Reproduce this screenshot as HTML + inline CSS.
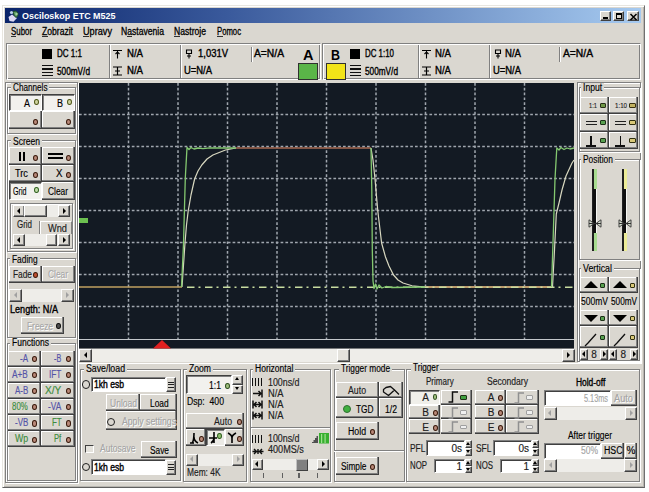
<!DOCTYPE html>
<html><head><meta charset="utf-8"><style>
html,body{margin:0;padding:0;width:649px;height:492px;overflow:hidden;background:#fff;}
body{position:relative;font-family:"Liberation Sans",sans-serif;}

</style></head><body>
<div style="position:absolute;left:2px;top:5px;width:643px;height:482.5px;background:#dad7d0;box-sizing:border-box;border-top:1px solid #e8e6e0;border-left:1px solid #e8e6e0;border-right:1.5px solid #707070;border-bottom:1.5px solid #606060;box-shadow:inset 1px 1px 0 #ffffff, inset -1px -1px 0 #b8b6b0;"></div>
<div style="position:absolute;left:5px;top:8px;width:636px;height:15px;background:linear-gradient(to right,#0a246a 0%,#3a5a9c 35%,#a6caf0 100%);"></div>
<svg style="position:absolute;left:7px;top:9px" width="14" height="14" viewBox="0 0 14 14"><path d="M1.5 8 L5 5.5 L10 9 L6.5 12.8 L2.5 12 Z" fill="#dcd8f4"/><path d="M6 2.5 Q9 1 11 4 Q11.5 7 9 8.5 Q6.5 7 6 2.5Z" fill="#5a9a60" stroke="#1e4a2a" stroke-width="1"/><circle cx="4.5" cy="3.5" r="1.6" fill="#b8d0e8"/><circle cx="9.5" cy="5" r="1.2" fill="#a0d0a0"/></svg>
<div style="position:absolute;left:21.50px;top:12.26px;font-size:8.8px;line-height:8.8px;font-weight:700;color:#fff;white-space:pre;transform-origin:0 0;transform:scaleX(1.017);">Osciloskop ETC M525</div>
<div style="position:absolute;left:600px;top:11px;width:11px;height:10px;background:#dad7d0;box-sizing:border-box;border-top:1px solid #ffffff;border-left:1px solid #ffffff;border-right:1px solid #404040;border-bottom:1px solid #404040;box-shadow:inset -1px -1px 0 #808080;"></div>
<div style="position:absolute;left:613px;top:11px;width:11px;height:10px;background:#dad7d0;box-sizing:border-box;border-top:1px solid #ffffff;border-left:1px solid #ffffff;border-right:1px solid #404040;border-bottom:1px solid #404040;box-shadow:inset -1px -1px 0 #808080;"></div>
<div style="position:absolute;left:627px;top:11px;width:12px;height:10px;background:#dad7d0;box-sizing:border-box;border-top:1px solid #ffffff;border-left:1px solid #ffffff;border-right:1px solid #404040;border-bottom:1px solid #404040;box-shadow:inset -1px -1px 0 #808080;"></div>
<div style="position:absolute;left:603px;top:17px;width:5px;height:2px;background:#000;"></div>
<div style="position:absolute;left:615.5px;top:13px;width:6.0px;height:6px;box-sizing:border-box;border:1px solid #000;border-top:2px solid #000;"></div>
<svg style="position:absolute;left:629px;top:12.5px" width="9" height="8" viewBox="0 0 9 8"><path d="M1.5 1 L7.5 7 M7.5 1 L1.5 7" stroke="#000" stroke-width="1.5"/></svg>
<div style="position:absolute;left:10.60px;top:26.50px;font-size:10px;line-height:10px;font-weight:400;color:#000;white-space:pre;transform-origin:0 0;transform:scaleX(0.787);-webkit-text-stroke:0.15px #000;-webkit-text-stroke:0.3px #000;">Subor</div>
<div style="position:absolute;left:10.6px;top:35.5px;width:5.500000000000002px;height:1.0px;background:#303030;"></div>
<div style="position:absolute;left:42.00px;top:26.50px;font-size:10px;line-height:10px;font-weight:400;color:#000;white-space:pre;transform-origin:0 0;transform:scaleX(0.858);-webkit-text-stroke:0.15px #000;-webkit-text-stroke:0.3px #000;">Zobrazit</div>
<div style="position:absolute;left:42px;top:35.5px;width:5.5px;height:1.0px;background:#303030;"></div>
<div style="position:absolute;left:83.00px;top:26.50px;font-size:10px;line-height:10px;font-weight:400;color:#000;white-space:pre;transform-origin:0 0;transform:scaleX(0.915);-webkit-text-stroke:0.15px #000;-webkit-text-stroke:0.3px #000;">Upravy</div>
<div style="position:absolute;left:83px;top:35.5px;width:5.5px;height:1.0px;background:#303030;"></div>
<div style="position:absolute;left:121.00px;top:26.50px;font-size:10px;line-height:10px;font-weight:400;color:#000;white-space:pre;transform-origin:0 0;transform:scaleX(0.859);-webkit-text-stroke:0.15px #000;-webkit-text-stroke:0.3px #000;">Nastavenia</div>
<div style="position:absolute;left:126.5px;top:35.5px;width:5.5px;height:1.0px;background:#303030;"></div>
<div style="position:absolute;left:174.30px;top:26.50px;font-size:10px;line-height:10px;font-weight:400;color:#000;white-space:pre;transform-origin:0 0;transform:scaleX(0.859);-webkit-text-stroke:0.15px #000;-webkit-text-stroke:0.3px #000;">Nastroje</div>
<div style="position:absolute;left:174.3px;top:35.5px;width:5.5px;height:1.0px;background:#303030;"></div>
<div style="position:absolute;left:217.00px;top:26.50px;font-size:10px;line-height:10px;font-weight:400;color:#000;white-space:pre;transform-origin:0 0;transform:scaleX(0.771);-webkit-text-stroke:0.15px #000;-webkit-text-stroke:0.3px #000;">Pomoc</div>
<div style="position:absolute;left:217px;top:35.5px;width:5.5px;height:1.0px;background:#303030;"></div>
<div style="position:absolute;left:6px;top:43px;width:315px;height:37px;box-sizing:border-box;border-top:1px solid #808080;border-left:1px solid #808080;border-right:1px solid #ffffff;border-bottom:1px solid #ffffff;box-shadow:inset 1px 1px 0 #ffffff, inset -1px -1px 0 #808080;"></div>
<div style="position:absolute;left:322px;top:43px;width:319px;height:37px;box-sizing:border-box;border-top:1px solid #808080;border-left:1px solid #808080;border-right:1px solid #ffffff;border-bottom:1px solid #ffffff;box-shadow:inset 1px 1px 0 #ffffff, inset -1px -1px 0 #808080;"></div>
<div style="position:absolute;left:42px;top:49px;width:10px;height:10px;background:#000;"></div>
<div style="position:absolute;left:56.60px;top:49.00px;font-size:10px;line-height:10px;font-weight:400;color:#000;white-space:pre;transform-origin:0 0;transform:scaleX(0.803);-webkit-text-stroke:0.15px #000;-webkit-text-stroke:0.35px #000;">DC 1:1</div>
<div style="position:absolute;left:42px;top:65.0px;width:11px;height:1.2999999999999972px;background:#101010;"></div>
<div style="position:absolute;left:42px;top:68.4px;width:11px;height:1.2999999999999972px;background:#101010;"></div>
<div style="position:absolute;left:42px;top:71.8px;width:11px;height:1.2999999999999972px;background:#101010;"></div>
<div style="position:absolute;left:42px;top:75.2px;width:11px;height:1.2999999999999972px;background:#101010;"></div>
<div style="position:absolute;left:56.60px;top:66.50px;font-size:10px;line-height:10px;font-weight:400;color:#000;white-space:pre;transform-origin:0 0;transform:scaleX(0.824);-webkit-text-stroke:0.15px #000;-webkit-text-stroke:0.35px #000;">500mV/d</div>
<div style="position:absolute;left:109px;top:45px;width:1px;height:33px;background:#808080;"></div>
<div style="position:absolute;left:110px;top:45px;width:1px;height:33px;background:#ffffff;"></div>
<svg style="position:absolute;left:112px;top:48.5px" width="11" height="10" viewBox="0 0 11 10"><path d="M1 1.5 H10 M5.5 1.5 V9.5 M3.5 5 L5.5 3 L7.5 5" stroke="#000" stroke-width="1.1" fill="none"/></svg>
<div style="position:absolute;left:126.80px;top:49.00px;font-size:10px;line-height:10px;font-weight:400;color:#000;white-space:pre;transform-origin:0 0;transform:scaleX(0.960);-webkit-text-stroke:0.15px #000;-webkit-text-stroke:0.35px #000;">N/A</div>
<svg style="position:absolute;left:112px;top:65.5px" width="11" height="10" viewBox="0 0 11 10"><path d="M1 1 H10 M1 9 H10 M5.5 1 V9 M3 5 H8" stroke="#000" stroke-width="1.2" fill="none"/></svg>
<div style="position:absolute;left:126.80px;top:66.30px;font-size:10px;line-height:10px;font-weight:400;color:#000;white-space:pre;transform-origin:0 0;transform:scaleX(0.960);-webkit-text-stroke:0.15px #000;-webkit-text-stroke:0.35px #000;">N/A</div>
<div style="position:absolute;left:180px;top:45px;width:1px;height:33px;background:#808080;"></div>
<div style="position:absolute;left:181px;top:45px;width:1px;height:33px;background:#ffffff;"></div>
<svg style="position:absolute;left:184px;top:48.5px" width="10" height="10" viewBox="0 0 10 10"><path d="M2.5 1 H7.5 V4.5 H2.5 Z M5 4.5 V9.5 M3 7 H7" stroke="#000" stroke-width="1.1" fill="none"/></svg>
<div style="position:absolute;left:198.00px;top:49.00px;font-size:10px;line-height:10px;font-weight:400;color:#000;white-space:pre;transform-origin:0 0;transform:scaleX(0.946);-webkit-text-stroke:0.15px #000;-webkit-text-stroke:0.35px #000;">1,031V</div>
<div style="position:absolute;left:184.00px;top:66.30px;font-size:10px;line-height:10px;font-weight:400;color:#000;white-space:pre;transform-origin:0 0;transform:scaleX(0.942);-webkit-text-stroke:0.15px #000;-webkit-text-stroke:0.35px #000;">U=N/A</div>
<div style="position:absolute;left:251px;top:47px;width:1px;height:15px;background:#808080;"></div>
<div style="position:absolute;left:252px;top:47px;width:1px;height:15px;background:#ffffff;"></div>
<div style="position:absolute;left:253.60px;top:49.00px;font-size:10px;line-height:10px;font-weight:400;color:#000;white-space:pre;transform-origin:0 0;transform:scaleX(1.028);-webkit-text-stroke:0.15px #000;-webkit-text-stroke:0.35px #000;">A=N/A</div>
<div style="position:absolute;left:303.40px;top:48.20px;font-size:14px;line-height:14px;font-weight:700;color:#000;white-space:pre;transform-origin:0 0;transform:scaleX(1.037);">A</div>
<div style="position:absolute;left:298px;top:63px;width:20px;height:16.5px;background:#5ab548;box-sizing:border-box;border:1px solid #303030;"></div>
<div style="position:absolute;left:330.60px;top:48.20px;font-size:14px;line-height:14px;font-weight:700;color:#000;white-space:pre;transform-origin:0 0;transform:scaleX(0.889);">B</div>
<div style="position:absolute;left:325.5px;top:63px;width:20.0px;height:16.5px;background:#f2e418;box-sizing:border-box;border:1px solid #303030;"></div>
<div style="position:absolute;left:350.3px;top:48.7px;width:10.0px;height:10.0px;background:#000;"></div>
<div style="position:absolute;left:364.60px;top:49.00px;font-size:10px;line-height:10px;font-weight:400;color:#000;white-space:pre;transform-origin:0 0;transform:scaleX(0.790);-webkit-text-stroke:0.15px #000;-webkit-text-stroke:0.35px #000;">DC 1:10</div>
<div style="position:absolute;left:350px;top:65.0px;width:11px;height:1.2999999999999972px;background:#101010;"></div>
<div style="position:absolute;left:350px;top:68.4px;width:11px;height:1.2999999999999972px;background:#101010;"></div>
<div style="position:absolute;left:350px;top:71.8px;width:11px;height:1.2999999999999972px;background:#101010;"></div>
<div style="position:absolute;left:350px;top:75.2px;width:11px;height:1.2999999999999972px;background:#101010;"></div>
<div style="position:absolute;left:364.60px;top:66.50px;font-size:10px;line-height:10px;font-weight:400;color:#000;white-space:pre;transform-origin:0 0;transform:scaleX(0.824);-webkit-text-stroke:0.15px #000;-webkit-text-stroke:0.35px #000;">500mV/d</div>
<div style="position:absolute;left:418px;top:45px;width:1px;height:33px;background:#808080;"></div>
<div style="position:absolute;left:419px;top:45px;width:1px;height:33px;background:#ffffff;"></div>
<svg style="position:absolute;left:421px;top:48.5px" width="11" height="10" viewBox="0 0 11 10"><path d="M1 1.5 H10 M5.5 1.5 V9.5 M3.5 5 L5.5 3 L7.5 5" stroke="#000" stroke-width="1.1" fill="none"/></svg>
<div style="position:absolute;left:434.80px;top:49.00px;font-size:10px;line-height:10px;font-weight:400;color:#000;white-space:pre;transform-origin:0 0;transform:scaleX(0.960);-webkit-text-stroke:0.15px #000;-webkit-text-stroke:0.35px #000;">N/A</div>
<svg style="position:absolute;left:421px;top:65.5px" width="11" height="10" viewBox="0 0 11 10"><path d="M1 1 H10 M1 9 H10 M5.5 1 V9 M3 5 H8" stroke="#000" stroke-width="1.2" fill="none"/></svg>
<div style="position:absolute;left:434.80px;top:66.30px;font-size:10px;line-height:10px;font-weight:400;color:#000;white-space:pre;transform-origin:0 0;transform:scaleX(0.960);-webkit-text-stroke:0.15px #000;-webkit-text-stroke:0.35px #000;">N/A</div>
<div style="position:absolute;left:489px;top:45px;width:1px;height:33px;background:#808080;"></div>
<div style="position:absolute;left:490px;top:45px;width:1px;height:33px;background:#ffffff;"></div>
<svg style="position:absolute;left:492.5px;top:48.5px" width="10" height="10" viewBox="0 0 10 10"><path d="M2.5 1 H7.5 V4.5 H2.5 Z M5 4.5 V9.5 M3 7 H7" stroke="#000" stroke-width="1.1" fill="none"/></svg>
<div style="position:absolute;left:505.00px;top:49.00px;font-size:10px;line-height:10px;font-weight:400;color:#000;white-space:pre;transform-origin:0 0;transform:scaleX(0.960);-webkit-text-stroke:0.15px #000;-webkit-text-stroke:0.35px #000;">N/A</div>
<div style="position:absolute;left:492.50px;top:66.30px;font-size:10px;line-height:10px;font-weight:400;color:#000;white-space:pre;transform-origin:0 0;transform:scaleX(0.942);-webkit-text-stroke:0.15px #000;-webkit-text-stroke:0.35px #000;">U=N/A</div>
<div style="position:absolute;left:559px;top:47px;width:1px;height:15px;background:#808080;"></div>
<div style="position:absolute;left:560px;top:47px;width:1px;height:15px;background:#ffffff;"></div>
<div style="position:absolute;left:563.00px;top:49.00px;font-size:10px;line-height:10px;font-weight:400;color:#000;white-space:pre;transform-origin:0 0;transform:scaleX(1.028);-webkit-text-stroke:0.15px #000;-webkit-text-stroke:0.35px #000;">A=N/A</div>
<svg style="position:absolute;left:79px;top:83px" width="495" height="265.5" viewBox="0 0 495 265.5"><rect x="0" y="0" width="495" height="265.5" fill="#131a23"/><line x1="49.5" y1="0" x2="49.5" y2="256" stroke="#a0a6ae" stroke-width="1.5" stroke-dasharray="2.7 2.1"/><line x1="99.0" y1="0" x2="99.0" y2="256" stroke="#a0a6ae" stroke-width="1.5" stroke-dasharray="2.7 2.1"/><line x1="148.5" y1="0" x2="148.5" y2="256" stroke="#a0a6ae" stroke-width="1.5" stroke-dasharray="2.7 2.1"/><line x1="198.0" y1="0" x2="198.0" y2="256" stroke="#a0a6ae" stroke-width="1.5" stroke-dasharray="2.7 2.1"/><line x1="247.5" y1="0" x2="247.5" y2="256" stroke="#a0a6ae" stroke-width="1.5" stroke-dasharray="2.7 2.1"/><line x1="297.0" y1="0" x2="297.0" y2="256" stroke="#a0a6ae" stroke-width="1.5" stroke-dasharray="2.7 2.1"/><line x1="346.5" y1="0" x2="346.5" y2="256" stroke="#a0a6ae" stroke-width="1.5" stroke-dasharray="2.7 2.1"/><line x1="396.0" y1="0" x2="396.0" y2="256" stroke="#a0a6ae" stroke-width="1.5" stroke-dasharray="2.7 2.1"/><line x1="445.5" y1="0" x2="445.5" y2="256" stroke="#a0a6ae" stroke-width="1.5" stroke-dasharray="2.7 2.1"/><line x1="0" y1="31.5" x2="495" y2="31.5" stroke="#a0a6ae" stroke-width="1.5" stroke-dasharray="2.7 2.1"/><line x1="0" y1="63.5" x2="495" y2="63.5" stroke="#a0a6ae" stroke-width="1.5" stroke-dasharray="2.7 2.1"/><line x1="0" y1="95.5" x2="495" y2="95.5" stroke="#a0a6ae" stroke-width="1.5" stroke-dasharray="2.7 2.1"/><line x1="0" y1="127.5" x2="495" y2="127.5" stroke="#a0a6ae" stroke-width="1.5" stroke-dasharray="2.7 2.1"/><line x1="0" y1="159.5" x2="495" y2="159.5" stroke="#a0a6ae" stroke-width="1.5" stroke-dasharray="2.7 2.1"/><line x1="0" y1="191.5" x2="495" y2="191.5" stroke="#a0a6ae" stroke-width="1.5" stroke-dasharray="2.7 2.1"/><line x1="0" y1="223.5" x2="495" y2="223.5" stroke="#a0a6ae" stroke-width="1.5" stroke-dasharray="2.7 2.1"/><line x1="0" y1="256.5" x2="495" y2="256.5" stroke="#c4c8cc" stroke-width="1.2"/><path d="M74 265.5 L83 257 L92 265.5 Z" fill="#e02020"/><polyline points="0.0,204.0 103.0,204.0" fill="none" stroke="#c0a060" stroke-width="1.6"/><polyline points="157.0,65.0 292.0,65.0" fill="none" stroke="#a86a52" stroke-width="1.7"/><polyline points="346.0,204.0 473.0,204.0" fill="none" stroke="#bc9a6c" stroke-width="1.8"/><line x1="104" y1="204.2" x2="495" y2="204.2" stroke="#c8dca0" stroke-width="1.6" stroke-dasharray="7.5 4 2 4.5" stroke-dashoffset="-4"/><polyline points="103.0,204.0 104.5,182.0 106.0,160.0 107.5,142.0 109.2,128.0 112.0,112.0 115.6,96.0 119.0,88.0 122.8,82.0 128.0,76.0 133.9,72.0 146.5,67.0 157.0,65.0" fill="none" stroke="#d8d8c0" stroke-width="1.2" stroke-linejoin="round"/><polyline points="292.0,65.0 294.0,77.0 296.0,96.0 298.8,128.0 302.6,160.0 306.5,174.0 310.0,183.0 314.5,192.0 319.0,197.0 324.0,200.0 333.0,202.8 346.0,204.0" fill="none" stroke="#d8d8c0" stroke-width="1.2" stroke-linejoin="round"/><polyline points="473.5,204.0 475.5,167.0 477.3,131.0 480.0,120.0 483.0,107.0 487.0,93.0 493.0,80.0 495.0,77.0" fill="none" stroke="#d8d8c0" stroke-width="1.2" stroke-linejoin="round"/><polyline points="102.5,204.0 104.5,161.0 106.3,95.0 108.0,64.5 110.0,66.5 112.0,64.5 115.0,66.0 119.0,65.0 124.0,65.6 131.0,64.8 157.0,65.0" fill="none" stroke="#84c870" stroke-width="1.3" stroke-linejoin="round"/><polyline points="292.0,65.0 292.8,107.0 293.3,167.0 294.0,198.0 295.0,205.5 296.5,201.0 298.0,206.0 300.0,202.0 303.0,205.0 307.0,203.5 313.0,204.5 346.0,204.0" fill="none" stroke="#84c870" stroke-width="1.3" stroke-linejoin="round"/><polyline points="472.5,204.0 474.0,160.0 476.0,96.0 477.8,65.0 480.0,67.0 482.0,64.5 485.0,66.5 488.0,65.0 491.0,66.0 495.0,65.0" fill="none" stroke="#84c870" stroke-width="1.3" stroke-linejoin="round"/></svg>
<div style="position:absolute;left:78.5px;top:217.5px;width:9.5px;height:5.5px;background:#6cc050;"></div>
<div style="position:absolute;left:5px;top:82px;width:73px;height:400.5px;box-sizing:border-box;border:1px solid #808080;box-shadow:inset 1px 1px 0 #ffffff, 1px 1px 0 #ffffff;"></div>
<div style="position:absolute;left:6.5px;top:87px;width:69.5px;height:46.5px;box-sizing:border-box;border:1px solid #808080;box-shadow:inset 1px 1px 0 #ffffff, 1px 1px 0 #ffffff;"></div>
<div style="position:absolute;left:10.8px;top:83px;width:38.5px;height:8px;background:#dad7d0;"></div>
<div style="position:absolute;left:12.80px;top:82.80px;font-size:10px;line-height:10px;font-weight:400;color:#000;white-space:pre;transform-origin:0 0;transform:scaleX(0.816);-webkit-text-stroke:0.15px #000;">Channels</div>
<div style="position:absolute;left:9px;top:94px;width:33px;height:17px;background:#f2f1ee;box-sizing:border-box;border-top:1px solid #404040;border-left:1px solid #404040;border-right:1px solid #ffffff;border-bottom:1px solid #ffffff;box-shadow:inset 1px 1px 0 #808080;"></div>
<div style="position:absolute;left:42px;top:94px;width:33px;height:17px;background:#f2f1ee;box-sizing:border-box;border-top:1px solid #404040;border-left:1px solid #404040;border-right:1px solid #ffffff;border-bottom:1px solid #ffffff;box-shadow:inset 1px 1px 0 #808080;"></div>
<div style="position:absolute;left:24.00px;top:99.00px;font-size:10px;line-height:10px;font-weight:400;color:#000;white-space:pre;transform-origin:0 0;transform:scaleX(0.899);-webkit-text-stroke:0.15px #000;">A</div>
<div style="position:absolute;left:33.800000000000004px;top:99.39999999999999px;width:4.799999999999997px;height:5.800000000000011px;border-radius:50%;background:#d0d4a0;box-sizing:border-box;border:1.3px solid #505818;"></div>
<div style="position:absolute;left:57.00px;top:99.00px;font-size:10px;line-height:10px;font-weight:400;color:#000;white-space:pre;transform-origin:0 0;transform:scaleX(0.899);-webkit-text-stroke:0.15px #000;">B</div>
<div style="position:absolute;left:66.8px;top:99.39999999999999px;width:4.800000000000011px;height:5.800000000000011px;border-radius:50%;background:#d0d4a0;box-sizing:border-box;border:1.3px solid #505818;"></div>
<div style="position:absolute;left:9px;top:111px;width:33px;height:17.5px;background:#dad7d0;box-sizing:border-box;border-right:1px solid #404040;border-bottom:1px solid #404040;box-shadow:inset -1px -1px 0 #808080, inset 1px 1px 0 #ffffff;"></div>
<div style="position:absolute;left:42px;top:111px;width:33px;height:17.5px;background:#dad7d0;box-sizing:border-box;border-right:1px solid #404040;border-bottom:1px solid #404040;box-shadow:inset -1px -1px 0 #808080, inset 1px 1px 0 #ffffff;"></div>
<div style="position:absolute;left:32.6px;top:118.7px;width:5.200000000000003px;height:6.199999999999989px;border-radius:50%;background:#b88878;box-sizing:border-box;border:1.3px solid #3a1a0c;"></div>
<div style="position:absolute;left:65.60000000000001px;top:118.7px;width:5.199999999999989px;height:6.199999999999989px;border-radius:50%;background:#b88878;box-sizing:border-box;border:1.3px solid #3a1a0c;"></div>
<div style="position:absolute;left:6.5px;top:139.5px;width:69.5px;height:112.5px;box-sizing:border-box;border:1px solid #808080;box-shadow:inset 1px 1px 0 #ffffff, 1px 1px 0 #ffffff;"></div>
<div style="position:absolute;left:10.5px;top:135.5px;width:31.0px;height:8.0px;background:#dad7d0;"></div>
<div style="position:absolute;left:12.50px;top:136.50px;font-size:10px;line-height:10px;font-weight:400;color:#000;white-space:pre;transform-origin:0 0;transform:scaleX(0.852);-webkit-text-stroke:0.15px #000;">Screen</div>
<div style="position:absolute;left:9px;top:147.4px;width:32.5px;height:17.19999999999999px;background:#dad7d0;box-sizing:border-box;border-right:1px solid #404040;border-bottom:1px solid #404040;box-shadow:inset -1px -1px 0 #808080, inset 1px 1px 0 #ffffff;"></div>
<div style="position:absolute;left:41.5px;top:147.4px;width:33.0px;height:17.19999999999999px;background:#dad7d0;box-sizing:border-box;border-right:1px solid #404040;border-bottom:1px solid #404040;box-shadow:inset -1px -1px 0 #808080, inset 1px 1px 0 #ffffff;"></div>
<div style="position:absolute;left:19px;top:151.5px;width:2px;height:9.0px;background:#000;"></div>
<div style="position:absolute;left:23px;top:151.5px;width:2px;height:9.0px;background:#000;"></div>
<div style="position:absolute;left:32.6px;top:154.70000000000002px;width:5.200000000000003px;height:6.199999999999989px;border-radius:50%;background:#b88878;box-sizing:border-box;border:1.3px solid #3a1a0c;"></div>
<div style="position:absolute;left:48px;top:153px;width:15px;height:1.5px;background:#000;"></div>
<div style="position:absolute;left:48px;top:157px;width:15px;height:1.5px;background:#000;"></div>
<div style="position:absolute;left:65.60000000000001px;top:154.70000000000002px;width:5.199999999999989px;height:6.199999999999989px;border-radius:50%;background:#b88878;box-sizing:border-box;border:1.3px solid #3a1a0c;"></div>
<div style="position:absolute;left:9px;top:164.6px;width:32.5px;height:17.200000000000017px;background:#dad7d0;box-sizing:border-box;border-right:1px solid #404040;border-bottom:1px solid #404040;box-shadow:inset -1px -1px 0 #808080, inset 1px 1px 0 #ffffff;"></div>
<div style="position:absolute;left:41.5px;top:164.6px;width:33.0px;height:17.200000000000017px;background:#dad7d0;box-sizing:border-box;border-right:1px solid #404040;border-bottom:1px solid #404040;box-shadow:inset -1px -1px 0 #808080, inset 1px 1px 0 #ffffff;"></div>
<div style="position:absolute;left:15.00px;top:169.30px;font-size:10px;line-height:10px;font-weight:400;color:#000;white-space:pre;transform-origin:0 0;transform:scaleX(0.923);-webkit-text-stroke:0.15px #000;">Trc</div>
<div style="position:absolute;left:32.6px;top:172.20000000000002px;width:5.200000000000003px;height:6.199999999999989px;border-radius:50%;background:#b88878;box-sizing:border-box;border:1.3px solid #3a1a0c;"></div>
<div style="position:absolute;left:55.50px;top:169.30px;font-size:10px;line-height:10px;font-weight:400;color:#000;white-space:pre;transform-origin:0 0;transform:scaleX(0.974);-webkit-text-stroke:0.15px #000;">X</div>
<div style="position:absolute;left:65.60000000000001px;top:172.20000000000002px;width:5.199999999999989px;height:6.199999999999989px;border-radius:50%;background:#b88878;box-sizing:border-box;border:1.3px solid #3a1a0c;"></div>
<div style="position:absolute;left:9px;top:182px;width:32.5px;height:18px;background:#f2f1ee;box-sizing:border-box;border-top:1px solid #404040;border-left:1px solid #404040;border-right:1px solid #ffffff;border-bottom:1px solid #ffffff;box-shadow:inset 1px 1px 0 #808080;"></div>
<div style="position:absolute;left:12.50px;top:187.00px;font-size:10px;line-height:10px;font-weight:400;color:#000;white-space:pre;transform-origin:0 0;transform:scaleX(0.714);-webkit-text-stroke:0.15px #000;">Grid</div>
<div style="position:absolute;left:34.300000000000004px;top:186.9px;width:4.799999999999997px;height:5.800000000000011px;border-radius:50%;background:#c0dca8;box-sizing:border-box;border:1.3px solid #306020;"></div>
<div style="position:absolute;left:41.5px;top:182px;width:33.0px;height:18px;background:#dad7d0;box-sizing:border-box;border-right:1px solid #404040;border-bottom:1px solid #404040;box-shadow:inset -1px -1px 0 #808080, inset 1px 1px 0 #ffffff;"></div>
<div style="position:absolute;left:47.50px;top:187.00px;font-size:10px;line-height:10px;font-weight:400;color:#000;white-space:pre;transform-origin:0 0;transform:scaleX(0.837);-webkit-text-stroke:0.15px #000;">Clear</div>
<div style="position:absolute;left:9.6px;top:202.6px;width:63.800000000000004px;height:46.400000000000006px;box-sizing:border-box;border:1px solid #808080;box-shadow:inset 1px 1px 0 #ffffff, 1px 1px 0 #ffffff;"></div>
<div style="position:absolute;left:12.5px;top:205px;width:57.5px;height:12px;background:#eeede9;"></div>
<div style="position:absolute;left:12.5px;top:205px;width:12.0px;height:12px;background:#dad7d0;box-sizing:border-box;border-top:1px solid #ffffff;border-left:1px solid #ffffff;border-right:1px solid #404040;border-bottom:1px solid #404040;box-shadow:inset -1px -1px 0 #808080;"></div>
<div style="position:absolute;left:58px;top:205px;width:12px;height:12px;background:#dad7d0;box-sizing:border-box;border-top:1px solid #ffffff;border-left:1px solid #ffffff;border-right:1px solid #404040;border-bottom:1px solid #404040;box-shadow:inset -1px -1px 0 #808080;"></div>
<div style="position:absolute;left:16.5px;top:207.5px;width:0;height:0;border-right:3.5px solid #000;border-top:3.5px solid transparent;border-bottom:3.5px solid transparent;"></div>
<div style="position:absolute;left:63.0px;top:207.5px;width:0;height:0;border-left:3.5px solid #000;border-top:3.5px solid transparent;border-bottom:3.5px solid transparent;"></div>
<div style="position:absolute;left:24px;top:205px;width:22.5px;height:12px;background:#e4e2dc;box-sizing:border-box;border-top:1px solid #ffffff;border-left:1px solid #ffffff;border-right:1px solid #404040;border-bottom:1px solid #404040;box-shadow:inset -1px -1px 0 #808080;"></div>
<div style="position:absolute;left:16.60px;top:219.50px;font-size:10px;line-height:10px;font-weight:400;color:#202020;white-space:pre;transform-origin:0 0;transform:scaleX(0.793);-webkit-text-stroke:0.15px #202020;">Grid</div>
<div style="position:absolute;left:40px;top:221px;width:32.2px;height:12.5px;box-sizing:border-box;border-left:1px solid #ffffff;border-top:1px solid #ffffff;border-right:1px solid #808080;box-shadow:-1px 0 0 #808080;"></div>
<div style="position:absolute;left:48.00px;top:223.60px;font-size:10px;line-height:10px;font-weight:400;color:#202020;white-space:pre;transform-origin:0 0;transform:scaleX(0.924);-webkit-text-stroke:0.15px #202020;">Wnd</div>
<div style="position:absolute;left:12.5px;top:234px;width:57.5px;height:12px;background:#eeede9;"></div>
<div style="position:absolute;left:12.5px;top:234px;width:12.0px;height:12px;background:#dad7d0;box-sizing:border-box;border-top:1px solid #ffffff;border-left:1px solid #ffffff;border-right:1px solid #404040;border-bottom:1px solid #404040;box-shadow:inset -1px -1px 0 #808080;"></div>
<div style="position:absolute;left:58px;top:234px;width:12px;height:12px;background:#dad7d0;box-sizing:border-box;border-top:1px solid #ffffff;border-left:1px solid #ffffff;border-right:1px solid #404040;border-bottom:1px solid #404040;box-shadow:inset -1px -1px 0 #808080;"></div>
<div style="position:absolute;left:16.5px;top:236.5px;width:0;height:0;border-right:3.5px solid #000;border-top:3.5px solid transparent;border-bottom:3.5px solid transparent;"></div>
<div style="position:absolute;left:63.0px;top:236.5px;width:0;height:0;border-left:3.5px solid #000;border-top:3.5px solid transparent;border-bottom:3.5px solid transparent;"></div>
<div style="position:absolute;left:46px;top:234px;width:11px;height:12px;background:#e4e2dc;box-sizing:border-box;border-top:1px solid #ffffff;border-left:1px solid #ffffff;border-right:1px solid #404040;border-bottom:1px solid #404040;box-shadow:inset -1px -1px 0 #808080;"></div>
<div style="position:absolute;left:6.5px;top:258px;width:69.5px;height:79.5px;box-sizing:border-box;border:1px solid #808080;box-shadow:inset 1px 1px 0 #ffffff, 1px 1px 0 #ffffff;"></div>
<div style="position:absolute;left:10.4px;top:254px;width:29.6px;height:8px;background:#dad7d0;"></div>
<div style="position:absolute;left:12.40px;top:255.00px;font-size:10px;line-height:10px;font-weight:400;color:#000;white-space:pre;transform-origin:0 0;transform:scaleX(0.837);-webkit-text-stroke:0.15px #000;">Fading</div>
<div style="position:absolute;left:9px;top:266px;width:32.5px;height:16.600000000000023px;background:#dad7d0;box-sizing:border-box;border-right:1px solid #404040;border-bottom:1px solid #404040;box-shadow:inset -1px -1px 0 #808080, inset 1px 1px 0 #ffffff;"></div>
<div style="position:absolute;left:41.5px;top:266px;width:33.0px;height:16.600000000000023px;background:#dad7d0;box-sizing:border-box;border-right:1px solid #404040;border-bottom:1px solid #404040;box-shadow:inset -1px -1px 0 #808080, inset 1px 1px 0 #ffffff;"></div>
<div style="position:absolute;left:13.00px;top:270.00px;font-size:10px;line-height:10px;font-weight:400;color:#202020;white-space:pre;transform-origin:0 0;transform:scaleX(0.833);-webkit-text-stroke:0.15px #202020;">Fade</div>
<div style="position:absolute;left:33.1px;top:271.7px;width:5.200000000000003px;height:6.2000000000000455px;border-radius:50%;background:#c05030;box-sizing:border-box;border:1.3px solid #401808;"></div>
<div style="position:absolute;left:47.50px;top:270.00px;font-size:10px;line-height:10px;font-weight:400;color:#a8a8a8;white-space:pre;transform-origin:0 0;transform:scaleX(0.837);-webkit-text-stroke:0.15px #a8a8a8;text-shadow:1px 1px 0 #ffffff;">Clear</div>
<div style="position:absolute;left:9px;top:288.6px;width:65px;height:13.399999999999977px;background:#eeede9;"></div>
<div style="position:absolute;left:9px;top:288.6px;width:13.399999999999977px;height:13.399999999999977px;background:#dad7d0;box-sizing:border-box;border-top:1px solid #ffffff;border-left:1px solid #ffffff;border-right:1px solid #404040;border-bottom:1px solid #404040;box-shadow:inset -1px -1px 0 #808080;"></div>
<div style="position:absolute;left:60.60000000000002px;top:288.6px;width:13.399999999999977px;height:13.399999999999977px;background:#dad7d0;box-sizing:border-box;border-top:1px solid #ffffff;border-left:1px solid #ffffff;border-right:1px solid #404040;border-bottom:1px solid #404040;box-shadow:inset -1px -1px 0 #808080;"></div>
<div style="position:absolute;left:13.699999999999989px;top:291.8px;width:0;height:0;border-right:3.5px solid #a0a0a0;border-top:3.5px solid transparent;border-bottom:3.5px solid transparent;"></div>
<div style="position:absolute;left:66.30000000000001px;top:291.8px;width:0;height:0;border-left:3.5px solid #a0a0a0;border-top:3.5px solid transparent;border-bottom:3.5px solid transparent;"></div>
<div style="position:absolute;left:9.50px;top:305.00px;font-size:10px;line-height:10px;font-weight:400;color:#000;white-space:pre;transform-origin:0 0;transform:scaleX(0.909);-webkit-text-stroke:0.15px #000;-webkit-text-stroke:0.35px #000;">Length: N/A</div>
<div style="position:absolute;left:21px;top:317px;width:43px;height:17.30000000000001px;background:#dad7d0;box-sizing:border-box;border-right:1px solid #404040;border-bottom:1px solid #404040;box-shadow:inset -1px -1px 0 #808080, inset 1px 1px 0 #ffffff;"></div>
<div style="position:absolute;left:27.00px;top:321.50px;font-size:10px;line-height:10px;font-weight:400;color:#a8a8a8;white-space:pre;transform-origin:0 0;transform:scaleX(0.835);-webkit-text-stroke:0.15px #a8a8a8;text-shadow:1px 1px 0 #ffffff;">Freeze</div>
<div style="position:absolute;left:55.800000000000004px;top:323.40000000000003px;width:4.799999999999997px;height:5.7999999999999545px;border-radius:50%;background:#505050;box-sizing:border-box;border:1.3px solid #101010;"></div>
<div style="position:absolute;left:6.5px;top:342.7px;width:69.5px;height:138.8px;box-sizing:border-box;border:1px solid #808080;box-shadow:inset 1px 1px 0 #ffffff, 1px 1px 0 #ffffff;"></div>
<div style="position:absolute;left:10px;top:338.7px;width:41px;height:8.0px;background:#dad7d0;"></div>
<div style="position:absolute;left:12.00px;top:338.30px;font-size:10px;line-height:10px;font-weight:400;color:#000;white-space:pre;transform-origin:0 0;transform:scaleX(0.853);-webkit-text-stroke:0.15px #000;">Functions</div>
<div style="position:absolute;left:8.4px;top:350.5px;width:32.9px;height:16.100000000000023px;background:#dad7d0;box-sizing:border-box;border-right:1px solid #404040;border-bottom:1px solid #404040;box-shadow:inset -1px -1px 0 #808080, inset 1px 1px 0 #ffffff;"></div>
<div style="position:absolute;left:19.70px;top:353.70px;font-size:10px;line-height:10px;font-weight:400;color:#5454a8;white-space:pre;transform-origin:0 0;transform:scaleX(0.800);-webkit-text-stroke:0.15px #5454a8;">-A</div>
<div style="position:absolute;left:32.1px;top:356.0px;width:5.200000000000003px;height:6.2000000000000455px;border-radius:50%;background:#b88878;box-sizing:border-box;border:1.3px solid #3a1a0c;"></div>
<div style="position:absolute;left:41.3px;top:350.5px;width:33.900000000000006px;height:16.100000000000023px;background:#dad7d0;box-sizing:border-box;border-right:1px solid #404040;border-bottom:1px solid #404040;box-shadow:inset -1px -1px 0 #808080, inset 1px 1px 0 #ffffff;"></div>
<div style="position:absolute;left:54.40px;top:353.70px;font-size:10px;line-height:10px;font-weight:400;color:#5454a8;white-space:pre;transform-origin:0 0;transform:scaleX(0.720);-webkit-text-stroke:0.15px #5454a8;">-B</div>
<div style="position:absolute;left:66.00000000000001px;top:356.0px;width:5.199999999999989px;height:6.2000000000000455px;border-radius:50%;background:#b88878;box-sizing:border-box;border:1.3px solid #3a1a0c;"></div>
<div style="position:absolute;left:8.4px;top:366.6px;width:32.9px;height:16.100000000000023px;background:#dad7d0;box-sizing:border-box;border-right:1px solid #404040;border-bottom:1px solid #404040;box-shadow:inset -1px -1px 0 #808080, inset 1px 1px 0 #ffffff;"></div>
<div style="position:absolute;left:11.90px;top:369.80px;font-size:10px;line-height:10px;font-weight:400;color:#5454a8;white-space:pre;transform-origin:0 0;transform:scaleX(0.823);-webkit-text-stroke:0.15px #5454a8;">A+B</div>
<div style="position:absolute;left:32.1px;top:372.1px;width:5.200000000000003px;height:6.2000000000000455px;border-radius:50%;background:#b88878;box-sizing:border-box;border:1.3px solid #3a1a0c;"></div>
<div style="position:absolute;left:41.3px;top:366.6px;width:33.900000000000006px;height:16.100000000000023px;background:#dad7d0;box-sizing:border-box;border-right:1px solid #404040;border-bottom:1px solid #404040;box-shadow:inset -1px -1px 0 #808080, inset 1px 1px 0 #ffffff;"></div>
<div style="position:absolute;left:49.20px;top:369.80px;font-size:10px;line-height:10px;font-weight:400;color:#5454a8;white-space:pre;transform-origin:0 0;transform:scaleX(0.827);-webkit-text-stroke:0.15px #5454a8;">IFT</div>
<div style="position:absolute;left:66.00000000000001px;top:372.1px;width:5.199999999999989px;height:6.2000000000000455px;border-radius:50%;background:#b88878;box-sizing:border-box;border:1.3px solid #3a1a0c;"></div>
<div style="position:absolute;left:8.4px;top:382.7px;width:32.9px;height:16.100000000000023px;background:#dad7d0;box-sizing:border-box;border-right:1px solid #404040;border-bottom:1px solid #404040;box-shadow:inset -1px -1px 0 #808080, inset 1px 1px 0 #ffffff;"></div>
<div style="position:absolute;left:14.50px;top:385.90px;font-size:10px;line-height:10px;font-weight:400;color:#5454a8;white-space:pre;transform-origin:0 0;transform:scaleX(0.792);-webkit-text-stroke:0.15px #5454a8;">A-B</div>
<div style="position:absolute;left:32.1px;top:388.2px;width:5.200000000000003px;height:6.2000000000000455px;border-radius:50%;background:#b88878;box-sizing:border-box;border:1.3px solid #3a1a0c;"></div>
<div style="position:absolute;left:41.3px;top:382.7px;width:33.900000000000006px;height:16.100000000000023px;background:#dad7d0;box-sizing:border-box;border-right:1px solid #404040;border-bottom:1px solid #404040;box-shadow:inset -1px -1px 0 #808080, inset 1px 1px 0 #ffffff;"></div>
<div style="position:absolute;left:45.30px;top:385.90px;font-size:10px;line-height:10px;font-weight:400;color:#3c8c3c;white-space:pre;transform-origin:0 0;transform:scaleX(1.011);-webkit-text-stroke:0.15px #3c8c3c;">X/Y</div>
<div style="position:absolute;left:66.00000000000001px;top:388.2px;width:5.199999999999989px;height:6.2000000000000455px;border-radius:50%;background:#b88878;box-sizing:border-box;border:1.3px solid #3a1a0c;"></div>
<div style="position:absolute;left:8.4px;top:398.8px;width:32.9px;height:16.100000000000023px;background:#dad7d0;box-sizing:border-box;border-right:1px solid #404040;border-bottom:1px solid #404040;box-shadow:inset -1px -1px 0 #808080, inset 1px 1px 0 #ffffff;"></div>
<div style="position:absolute;left:11.90px;top:402.00px;font-size:10px;line-height:10px;font-weight:400;color:#3c8c3c;white-space:pre;transform-origin:0 0;transform:scaleX(0.789);-webkit-text-stroke:0.15px #3c8c3c;">80%</div>
<div style="position:absolute;left:32.1px;top:404.3px;width:5.200000000000003px;height:6.2000000000000455px;border-radius:50%;background:#b88878;box-sizing:border-box;border:1.3px solid #3a1a0c;"></div>
<div style="position:absolute;left:41.3px;top:398.8px;width:33.900000000000006px;height:16.100000000000023px;background:#dad7d0;box-sizing:border-box;border-right:1px solid #404040;border-bottom:1px solid #404040;box-shadow:inset -1px -1px 0 #808080, inset 1px 1px 0 #ffffff;"></div>
<div style="position:absolute;left:48.40px;top:402.00px;font-size:10px;line-height:10px;font-weight:400;color:#5454a8;white-space:pre;transform-origin:0 0;transform:scaleX(0.828);-webkit-text-stroke:0.15px #5454a8;">-VA</div>
<div style="position:absolute;left:66.00000000000001px;top:404.3px;width:5.199999999999989px;height:6.2000000000000455px;border-radius:50%;background:#b88878;box-sizing:border-box;border:1.3px solid #3a1a0c;"></div>
<div style="position:absolute;left:8.4px;top:414.9px;width:32.9px;height:16.100000000000023px;background:#dad7d0;box-sizing:border-box;border-right:1px solid #404040;border-bottom:1px solid #404040;box-shadow:inset -1px -1px 0 #808080, inset 1px 1px 0 #ffffff;"></div>
<div style="position:absolute;left:14.50px;top:418.10px;font-size:10px;line-height:10px;font-weight:400;color:#5454a8;white-space:pre;transform-origin:0 0;transform:scaleX(0.792);-webkit-text-stroke:0.15px #5454a8;">-VB</div>
<div style="position:absolute;left:32.1px;top:420.4px;width:5.200000000000003px;height:6.2000000000000455px;border-radius:50%;background:#b88878;box-sizing:border-box;border:1.3px solid #3a1a0c;"></div>
<div style="position:absolute;left:41.3px;top:414.9px;width:33.900000000000006px;height:16.100000000000023px;background:#dad7d0;box-sizing:border-box;border-right:1px solid #404040;border-bottom:1px solid #404040;box-shadow:inset -1px -1px 0 #808080, inset 1px 1px 0 #ffffff;"></div>
<div style="position:absolute;left:51.90px;top:418.10px;font-size:10px;line-height:10px;font-weight:400;color:#3c8c3c;white-space:pre;transform-origin:0 0;transform:scaleX(0.794);-webkit-text-stroke:0.15px #3c8c3c;">FT</div>
<div style="position:absolute;left:66.00000000000001px;top:420.4px;width:5.199999999999989px;height:6.2000000000000455px;border-radius:50%;background:#b88878;box-sizing:border-box;border:1.3px solid #3a1a0c;"></div>
<div style="position:absolute;left:8.4px;top:431.0px;width:32.9px;height:16.100000000000023px;background:#dad7d0;box-sizing:border-box;border-right:1px solid #404040;border-bottom:1px solid #404040;box-shadow:inset -1px -1px 0 #808080, inset 1px 1px 0 #ffffff;"></div>
<div style="position:absolute;left:14.50px;top:434.20px;font-size:10px;line-height:10px;font-weight:400;color:#3c8c3c;white-space:pre;transform-origin:0 0;transform:scaleX(0.880);-webkit-text-stroke:0.15px #3c8c3c;">Wp</div>
<div style="position:absolute;left:32.1px;top:436.5px;width:5.200000000000003px;height:6.2000000000000455px;border-radius:50%;background:#b88878;box-sizing:border-box;border:1.3px solid #3a1a0c;"></div>
<div style="position:absolute;left:41.3px;top:431.0px;width:33.900000000000006px;height:16.100000000000023px;background:#dad7d0;box-sizing:border-box;border-right:1px solid #404040;border-bottom:1px solid #404040;box-shadow:inset -1px -1px 0 #808080, inset 1px 1px 0 #ffffff;"></div>
<div style="position:absolute;left:54.40px;top:434.20px;font-size:10px;line-height:10px;font-weight:400;color:#3c8c3c;white-space:pre;transform-origin:0 0;transform:scaleX(0.762);-webkit-text-stroke:0.15px #3c8c3c;">Pf</div>
<div style="position:absolute;left:66.00000000000001px;top:436.5px;width:5.199999999999989px;height:6.2000000000000455px;border-radius:50%;background:#b88878;box-sizing:border-box;border:1.3px solid #3a1a0c;"></div>
<div style="position:absolute;left:577px;top:82px;width:64px;height:280px;box-sizing:border-box;border:1px solid #808080;box-shadow:inset 1px 1px 0 #ffffff, 1px 1px 0 #ffffff;"></div>
<div style="position:absolute;left:578.5px;top:87px;width:61.0px;height:64.80000000000001px;box-sizing:border-box;border:1px solid #808080;box-shadow:inset 1px 1px 0 #ffffff, 1px 1px 0 #ffffff;"></div>
<div style="position:absolute;left:580.5px;top:83px;width:23.200000000000045px;height:8px;background:#dad7d0;"></div>
<div style="position:absolute;left:582.50px;top:82.50px;font-size:10px;line-height:10px;font-weight:400;color:#000;white-space:pre;transform-origin:0 0;transform:scaleX(0.863);-webkit-text-stroke:0.15px #000;">Input</div>
<div style="position:absolute;left:579.7px;top:96.7px;width:29.0px;height:17.099999999999994px;background:#dad7d0;box-sizing:border-box;border-right:1px solid #404040;border-bottom:1px solid #404040;box-shadow:inset -1px -1px 0 #808080, inset 1px 1px 0 #ffffff;"></div>
<div style="position:absolute;left:599.7px;top:102.95px;width:6.5px;height:4.599999999999994px;background:#709848;box-sizing:border-box;border:1px solid #283018;border-radius:1px;"></div>
<div style="position:absolute;left:608.7px;top:96.7px;width:29.59999999999991px;height:17.099999999999994px;background:#dad7d0;box-sizing:border-box;border-right:1px solid #404040;border-bottom:1px solid #404040;box-shadow:inset -1px -1px 0 #808080, inset 1px 1px 0 #ffffff;"></div>
<div style="position:absolute;left:629.3px;top:102.95px;width:6.5px;height:4.599999999999994px;background:#c0b060;box-sizing:border-box;border:1px solid #383010;border-radius:1px;"></div>
<div style="position:absolute;left:579.7px;top:113.8px;width:29.0px;height:17.89999999999999px;background:#dad7d0;box-sizing:border-box;border-right:1px solid #404040;border-bottom:1px solid #404040;box-shadow:inset -1px -1px 0 #808080, inset 1px 1px 0 #ffffff;"></div>
<div style="position:absolute;left:599.7px;top:120.45px;width:6.5px;height:4.599999999999994px;background:#58a050;box-sizing:border-box;border:1px solid #1c3018;border-radius:1px;"></div>
<div style="position:absolute;left:608.7px;top:113.8px;width:29.59999999999991px;height:17.89999999999999px;background:#dad7d0;box-sizing:border-box;border-right:1px solid #404040;border-bottom:1px solid #404040;box-shadow:inset -1px -1px 0 #808080, inset 1px 1px 0 #ffffff;"></div>
<div style="position:absolute;left:629.3px;top:120.45px;width:6.5px;height:4.599999999999994px;background:#d8c878;box-sizing:border-box;border:1px solid #303010;border-radius:1px;"></div>
<div style="position:absolute;left:579.7px;top:131.7px;width:29.0px;height:17.100000000000023px;background:#dad7d0;box-sizing:border-box;border-right:1px solid #404040;border-bottom:1px solid #404040;box-shadow:inset -1px -1px 0 #808080, inset 1px 1px 0 #ffffff;"></div>
<div style="position:absolute;left:599.7px;top:137.95px;width:6.5px;height:4.600000000000023px;background:#58a050;box-sizing:border-box;border:1px solid #1c3018;border-radius:1px;"></div>
<div style="position:absolute;left:608.7px;top:131.7px;width:29.59999999999991px;height:17.100000000000023px;background:#dad7d0;box-sizing:border-box;border-right:1px solid #404040;border-bottom:1px solid #404040;box-shadow:inset -1px -1px 0 #808080, inset 1px 1px 0 #ffffff;"></div>
<div style="position:absolute;left:629.3px;top:137.95px;width:6.5px;height:4.600000000000023px;background:#d8c878;box-sizing:border-box;border:1px solid #303010;border-radius:1px;"></div>
<div style="position:absolute;left:588.50px;top:101.60px;font-size:8px;line-height:8px;font-weight:400;color:#202020;white-space:pre;transform-origin:0 0;transform:scaleX(0.719);-webkit-text-stroke:0.15px #202020;">1:1</div>
<div style="position:absolute;left:614.50px;top:101.60px;font-size:8px;line-height:8px;font-weight:400;color:#202020;white-space:pre;transform-origin:0 0;transform:scaleX(0.770);-webkit-text-stroke:0.15px #202020;">1:10</div>
<div style="position:absolute;left:585.7px;top:120.5px;width:11.0px;height:1.2999999999999972px;background:#202020;"></div>
<div style="position:absolute;left:585.7px;top:124px;width:11.0px;height:1.2999999999999972px;background:#202020;"></div>
<div style="position:absolute;left:585.7px;top:145px;width:10.0px;height:2px;background:#101010;"></div>
<div style="position:absolute;left:590.2px;top:136px;width:1.5px;height:9px;background:#101010;"></div>
<div style="position:absolute;left:615.3px;top:120.5px;width:11.0px;height:1.2999999999999972px;background:#202020;"></div>
<div style="position:absolute;left:615.3px;top:124px;width:11.0px;height:1.2999999999999972px;background:#202020;"></div>
<div style="position:absolute;left:615.3px;top:145px;width:10.0px;height:2px;background:#101010;"></div>
<div style="position:absolute;left:619.8px;top:136px;width:1.5px;height:9px;background:#101010;"></div>
<div style="position:absolute;left:578.5px;top:158.8px;width:61.0px;height:101.69999999999999px;box-sizing:border-box;border:1px solid #808080;box-shadow:inset 1px 1px 0 #ffffff, 1px 1px 0 #ffffff;"></div>
<div style="position:absolute;left:581px;top:154.8px;width:33.799999999999955px;height:8.0px;background:#dad7d0;"></div>
<div style="position:absolute;left:583.00px;top:154.80px;font-size:10px;line-height:10px;font-weight:400;color:#000;white-space:pre;transform-origin:0 0;transform:scaleX(0.838);-webkit-text-stroke:0.15px #000;">Position</div>
<div style="position:absolute;left:592px;top:169px;width:5px;height:82px;background:#f8f8f4;"></div>
<div style="position:absolute;left:592px;top:169px;width:1.5px;height:82px;background:#202020;"></div>
<div style="position:absolute;left:593.5px;top:169px;width:3.0px;height:20px;background:#a8dc90;"></div>
<div style="position:absolute;left:593.5px;top:233px;width:3.0px;height:18px;background:#a8dc90;"></div>
<div style="position:absolute;left:593px;top:189px;width:3px;height:44px;background:#101010;"></div>
<svg style="position:absolute;left:587.5px;top:219px" width="14" height="9" viewBox="0 0 14 9"><path d="M1 0.8 L6 4.5 L1 8.2 Z M13 0.8 L8 4.5 L13 8.2 Z" fill="#d8e0d0" stroke="#404040" stroke-width="1"/><path d="M1 4.5 H13" stroke="#303030" stroke-width="1"/></svg>
<div style="position:absolute;left:622px;top:169px;width:5px;height:82px;background:#f8f8f4;"></div>
<div style="position:absolute;left:622px;top:169px;width:1.5px;height:82px;background:#202020;"></div>
<div style="position:absolute;left:623.5px;top:169px;width:3.0px;height:20px;background:#ecec98;"></div>
<div style="position:absolute;left:623.5px;top:233px;width:3.0px;height:18px;background:#ecec98;"></div>
<div style="position:absolute;left:623px;top:189px;width:3px;height:44px;background:#101010;"></div>
<svg style="position:absolute;left:617.5px;top:219px" width="14" height="9" viewBox="0 0 14 9"><path d="M1 0.8 L6 4.5 L1 8.2 Z M13 0.8 L8 4.5 L13 8.2 Z" fill="#d8e0d0" stroke="#404040" stroke-width="1"/><path d="M1 4.5 H13" stroke="#303030" stroke-width="1"/></svg>
<div style="position:absolute;left:578.5px;top:267.7px;width:61.0px;height:93.30000000000001px;box-sizing:border-box;border:1px solid #808080;box-shadow:inset 1px 1px 0 #ffffff, 1px 1px 0 #ffffff;"></div>
<div style="position:absolute;left:580.6px;top:263.7px;width:33.0px;height:8.0px;background:#dad7d0;"></div>
<div style="position:absolute;left:582.60px;top:264.00px;font-size:10px;line-height:10px;font-weight:400;color:#000;white-space:pre;transform-origin:0 0;transform:scaleX(0.884);-webkit-text-stroke:0.15px #000;">Vertical</div>
<div style="position:absolute;left:579.6px;top:277px;width:29.0px;height:16.399999999999977px;background:#dad7d0;box-sizing:border-box;border-right:1px solid #404040;border-bottom:1px solid #404040;box-shadow:inset -1px -1px 0 #808080, inset 1px 1px 0 #ffffff;"></div>
<div style="position:absolute;left:583.6px;top:281px;width:0;height:0;border-left:7px solid transparent;border-right:7px solid transparent;border-bottom:7.5px solid #000;"></div>
<div style="position:absolute;left:600.1px;top:283px;width:5.0px;height:4.5px;background:#58a050;box-sizing:border-box;border:1px solid #1c3018;border-radius:1px;"></div>
<div style="position:absolute;left:579.6px;top:310px;width:29.0px;height:15.800000000000011px;background:#dad7d0;box-sizing:border-box;border-right:1px solid #404040;border-bottom:1px solid #404040;box-shadow:inset -1px -1px 0 #808080, inset 1px 1px 0 #ffffff;"></div>
<div style="position:absolute;left:583.6px;top:315px;width:0;height:0;border-left:7px solid transparent;border-right:7px solid transparent;border-top:7.5px solid #000;"></div>
<div style="position:absolute;left:600.1px;top:316px;width:5.0px;height:4.5px;background:#58a050;box-sizing:border-box;border:1px solid #1c3018;border-radius:1px;"></div>
<div style="position:absolute;left:579.6px;top:325.8px;width:29.0px;height:22.19999999999999px;background:#dad7d0;box-sizing:border-box;border-right:1px solid #404040;border-bottom:1px solid #404040;box-shadow:inset -1px -1px 0 #808080, inset 1px 1px 0 #ffffff;"></div>
<svg style="position:absolute;left:583.6px;top:332px" width="14" height="15" viewBox="0 0 14 15"><path d="M1 14 L4 11 L12 2" stroke="#101010" stroke-width="1.3" fill="none"/></svg>
<div style="position:absolute;left:600.1px;top:335px;width:5.0px;height:4.5px;background:#58a050;box-sizing:border-box;border:1px solid #1c3018;border-radius:1px;"></div>
<div style="position:absolute;left:579.6px;top:348px;width:29.0px;height:11.5px;background:#dad7d0;"></div>
<div style="position:absolute;left:580.1px;top:348.5px;width:8.0px;height:11.0px;background:#dad7d0;box-sizing:border-box;border-top:1px solid #ffffff;border-left:1px solid #ffffff;border-right:1px solid #404040;border-bottom:1px solid #404040;box-shadow:inset -1px -1px 0 #808080;"></div>
<div style="position:absolute;left:600.1px;top:348.5px;width:8.0px;height:11.0px;background:#dad7d0;box-sizing:border-box;border-top:1px solid #ffffff;border-left:1px solid #ffffff;border-right:1px solid #404040;border-bottom:1px solid #404040;box-shadow:inset -1px -1px 0 #808080;"></div>
<div style="position:absolute;left:582.1px;top:351px;width:0;height:0;border-right:3px solid #000;border-top:3px solid transparent;border-bottom:3px solid transparent;"></div>
<div style="position:absolute;left:603.1px;top:351px;width:0;height:0;border-left:3px solid #000;border-top:3px solid transparent;border-bottom:3px solid transparent;"></div>
<div style="position:absolute;left:591.32px;top:350.00px;font-size:10px;line-height:10px;font-weight:400;color:#202020;white-space:pre;transform-origin:0 0;transform:scaleX(1.000);-webkit-text-stroke:0.15px #202020;">8</div>
<div style="position:absolute;left:608.6px;top:277px;width:29.600000000000023px;height:16.399999999999977px;background:#dad7d0;box-sizing:border-box;border-right:1px solid #404040;border-bottom:1px solid #404040;box-shadow:inset -1px -1px 0 #808080, inset 1px 1px 0 #ffffff;"></div>
<div style="position:absolute;left:612.6px;top:281px;width:0;height:0;border-left:7px solid transparent;border-right:7px solid transparent;border-bottom:7.5px solid #000;"></div>
<div style="position:absolute;left:629.7px;top:283px;width:5.0px;height:4.5px;background:#d8c878;box-sizing:border-box;border:1px solid #303010;border-radius:1px;"></div>
<div style="position:absolute;left:608.6px;top:310px;width:29.600000000000023px;height:15.800000000000011px;background:#dad7d0;box-sizing:border-box;border-right:1px solid #404040;border-bottom:1px solid #404040;box-shadow:inset -1px -1px 0 #808080, inset 1px 1px 0 #ffffff;"></div>
<div style="position:absolute;left:612.6px;top:315px;width:0;height:0;border-left:7px solid transparent;border-right:7px solid transparent;border-top:7.5px solid #000;"></div>
<div style="position:absolute;left:629.7px;top:316px;width:5.0px;height:4.5px;background:#d8c878;box-sizing:border-box;border:1px solid #303010;border-radius:1px;"></div>
<div style="position:absolute;left:608.6px;top:325.8px;width:29.600000000000023px;height:22.19999999999999px;background:#dad7d0;box-sizing:border-box;border-right:1px solid #404040;border-bottom:1px solid #404040;box-shadow:inset -1px -1px 0 #808080, inset 1px 1px 0 #ffffff;"></div>
<svg style="position:absolute;left:612.6px;top:332px" width="14" height="15" viewBox="0 0 14 15"><path d="M1 14 L4 11 L12 2" stroke="#101010" stroke-width="1.3" fill="none"/></svg>
<div style="position:absolute;left:629.7px;top:335px;width:5.0px;height:4.5px;background:#d8c878;box-sizing:border-box;border:1px solid #303010;border-radius:1px;"></div>
<div style="position:absolute;left:608.6px;top:348px;width:29.600000000000023px;height:11.5px;background:#dad7d0;"></div>
<div style="position:absolute;left:609.1px;top:348.5px;width:8.0px;height:11.0px;background:#dad7d0;box-sizing:border-box;border-top:1px solid #ffffff;border-left:1px solid #ffffff;border-right:1px solid #404040;border-bottom:1px solid #404040;box-shadow:inset -1px -1px 0 #808080;"></div>
<div style="position:absolute;left:629.7px;top:348.5px;width:8.0px;height:11.0px;background:#dad7d0;box-sizing:border-box;border-top:1px solid #ffffff;border-left:1px solid #ffffff;border-right:1px solid #404040;border-bottom:1px solid #404040;box-shadow:inset -1px -1px 0 #808080;"></div>
<div style="position:absolute;left:611.1px;top:351px;width:0;height:0;border-right:3px solid #000;border-top:3px solid transparent;border-bottom:3px solid transparent;"></div>
<div style="position:absolute;left:632.7px;top:351px;width:0;height:0;border-left:3px solid #000;border-top:3px solid transparent;border-bottom:3px solid transparent;"></div>
<div style="position:absolute;left:620.62px;top:350.00px;font-size:10px;line-height:10px;font-weight:400;color:#202020;white-space:pre;transform-origin:0 0;transform:scaleX(1.000);-webkit-text-stroke:0.15px #202020;">8</div>
<div style="position:absolute;left:581.00px;top:297.00px;font-size:10px;line-height:10px;font-weight:400;color:#000;white-space:pre;transform-origin:0 0;transform:scaleX(0.852);-webkit-text-stroke:0.15px #000;">500mV</div>
<div style="position:absolute;left:610.50px;top:297.00px;font-size:10px;line-height:10px;font-weight:400;color:#000;white-space:pre;transform-origin:0 0;transform:scaleX(0.821);-webkit-text-stroke:0.15px #000;">500mV</div>
<div style="position:absolute;left:79px;top:349px;width:495.70000000000005px;height:13px;background:#eeede9;"></div>
<div style="position:absolute;left:79px;top:349px;width:13px;height:13px;background:#dad7d0;box-sizing:border-box;border-top:1px solid #ffffff;border-left:1px solid #ffffff;border-right:1px solid #404040;border-bottom:1px solid #404040;box-shadow:inset -1px -1px 0 #808080;"></div>
<div style="position:absolute;left:561.7px;top:349px;width:13.0px;height:13px;background:#dad7d0;box-sizing:border-box;border-top:1px solid #ffffff;border-left:1px solid #ffffff;border-right:1px solid #404040;border-bottom:1px solid #404040;box-shadow:inset -1px -1px 0 #808080;"></div>
<div style="position:absolute;left:83.5px;top:352.0px;width:0;height:0;border-right:3.5px solid #000;border-top:3.5px solid transparent;border-bottom:3.5px solid transparent;"></div>
<div style="position:absolute;left:567.2px;top:352.0px;width:0;height:0;border-left:3.5px solid #000;border-top:3.5px solid transparent;border-bottom:3.5px solid transparent;"></div>
<div style="position:absolute;left:337px;top:349px;width:13px;height:13px;background:#e4e2dc;box-sizing:border-box;border-top:1px solid #ffffff;border-left:1px solid #ffffff;border-right:1px solid #404040;border-bottom:1px solid #404040;box-shadow:inset -1px -1px 0 #808080;"></div>
<div style="position:absolute;left:78px;top:363px;width:563.5px;height:1px;background:#ffffff;"></div>
<div style="position:absolute;left:79.7px;top:369.3px;width:101.3px;height:112.19999999999999px;box-sizing:border-box;border:1px solid #808080;box-shadow:inset 1px 1px 0 #ffffff, 1px 1px 0 #ffffff;"></div>
<div style="position:absolute;left:84px;top:365.3px;width:43px;height:8.0px;background:#dad7d0;"></div>
<div style="position:absolute;left:86.00px;top:363.80px;font-size:10px;line-height:10px;font-weight:400;color:#000;white-space:pre;transform-origin:0 0;transform:scaleX(0.877);-webkit-text-stroke:0.15px #000;">Save/load</div>
<div style="position:absolute;left:81.8px;top:380.3px;width:8.400000000000006px;height:8.399999999999977px;border-radius:50%;box-sizing:border-box;border:1.3px solid #202020;"></div>
<div style="position:absolute;left:91px;top:376.6px;width:74.69999999999999px;height:15.399999999999977px;background:#ffffff;box-sizing:border-box;border-top:1px solid #808080;border-left:1px solid #808080;border-right:1px solid #ffffff;border-bottom:1px solid #ffffff;box-shadow:inset 1px 1px 0 #404040;"></div>
<div style="position:absolute;left:93.50px;top:379.80px;font-size:10px;line-height:10px;font-weight:400;color:#000;white-space:pre;transform-origin:0 0;transform:scaleX(0.856);-webkit-text-stroke:0.15px #000;-webkit-text-stroke:0.4px #000;">1kh esb</div>
<div style="position:absolute;left:165.7px;top:377px;width:10.300000000000011px;height:15px;background:#dad7d0;box-sizing:border-box;border-top:1px solid #ffffff;border-left:1px solid #ffffff;border-right:1px solid #404040;border-bottom:1px solid #404040;box-shadow:inset -1px -1px 0 #808080;"></div>
<div style="position:absolute;left:167.85px;top:381.5px;width:6.0px;height:1.3000000000000114px;background:#202020;"></div>
<div style="position:absolute;left:167.85px;top:384.0px;width:6.0px;height:1.3000000000000114px;background:#202020;"></div>
<div style="position:absolute;left:167.85px;top:386.5px;width:6.0px;height:1.3000000000000114px;background:#202020;"></div>
<div style="position:absolute;left:105.5px;top:394px;width:34.80000000000001px;height:17px;background:#dad7d0;box-sizing:border-box;border-right:1px solid #404040;border-bottom:1px solid #404040;box-shadow:inset -1px -1px 0 #808080, inset 1px 1px 0 #ffffff;"></div>
<div style="position:absolute;left:110.00px;top:398.60px;font-size:10px;line-height:10px;font-weight:400;color:#a4a4a4;white-space:pre;transform-origin:0 0;transform:scaleX(0.852);-webkit-text-stroke:0.15px #a4a4a4;text-shadow:1px 1px 0 #ffffff;">Unload</div>
<div style="position:absolute;left:140.3px;top:394px;width:36.39999999999998px;height:17px;background:#dad7d0;box-sizing:border-box;border-right:1px solid #404040;border-bottom:1px solid #404040;box-shadow:inset -1px -1px 0 #808080, inset 1px 1px 0 #ffffff;"></div>
<div style="position:absolute;left:150.40px;top:398.60px;font-size:10px;line-height:10px;font-weight:400;color:#000;white-space:pre;transform-origin:0 0;transform:scaleX(0.836);-webkit-text-stroke:0.15px #000;">Load</div>
<div style="position:absolute;left:105.5px;top:411px;width:71.19999999999999px;height:19px;background:#dad7d0;box-sizing:border-box;border-right:1px solid #404040;border-bottom:1px solid #404040;box-shadow:inset -1px -1px 0 #808080, inset 1px 1px 0 #ffffff;"></div>
<div style="position:absolute;left:107.1px;top:417.8px;width:8.400000000000006px;height:8.399999999999977px;border-radius:50%;box-sizing:border-box;border:1.3px solid #202020;"></div>
<div style="position:absolute;left:121.60px;top:416.80px;font-size:10px;line-height:10px;font-weight:400;color:#a4a4a4;white-space:pre;transform-origin:0 0;transform:scaleX(0.867);-webkit-text-stroke:0.15px #a4a4a4;text-shadow:1px 1px 0 #ffffff;">Apply settings</div>
<div style="position:absolute;left:85px;top:444.6px;width:8.599999999999994px;height:8.399999999999977px;background:#e4e2dc;box-sizing:border-box;border-top:1.5px solid #404040;border-left:1.5px solid #404040;border-right:1px solid #fff;border-bottom:1px solid #fff;"></div>
<div style="position:absolute;left:99.60px;top:444.00px;font-size:10px;line-height:10px;font-weight:400;color:#a4a4a4;white-space:pre;transform-origin:0 0;transform:scaleX(0.849);-webkit-text-stroke:0.15px #a4a4a4;text-shadow:1px 1px 0 #ffffff;">Autosave</div>
<div style="position:absolute;left:141px;top:441px;width:35.69999999999999px;height:17px;background:#dad7d0;box-sizing:border-box;border-right:1px solid #404040;border-bottom:1px solid #404040;box-shadow:inset -1px -1px 0 #808080, inset 1px 1px 0 #ffffff;"></div>
<div style="position:absolute;left:149.50px;top:445.50px;font-size:10px;line-height:10px;font-weight:400;color:#000;white-space:pre;transform-origin:0 0;transform:scaleX(0.833);-webkit-text-stroke:0.15px #000;">Save</div>
<div style="position:absolute;left:81.8px;top:462.8px;width:8.400000000000006px;height:8.399999999999977px;border-radius:50%;box-sizing:border-box;border:1.3px solid #202020;"></div>
<div style="position:absolute;left:91px;top:459px;width:75px;height:16px;background:#ffffff;box-sizing:border-box;border-top:1px solid #808080;border-left:1px solid #808080;border-right:1px solid #ffffff;border-bottom:1px solid #ffffff;box-shadow:inset 1px 1px 0 #404040;"></div>
<div style="position:absolute;left:93.50px;top:462.50px;font-size:10px;line-height:10px;font-weight:400;color:#000;white-space:pre;transform-origin:0 0;transform:scaleX(0.856);-webkit-text-stroke:0.15px #000;-webkit-text-stroke:0.4px #000;">1kh esb</div>
<div style="position:absolute;left:166px;top:459.5px;width:10px;height:15.5px;background:#dad7d0;box-sizing:border-box;border-top:1px solid #ffffff;border-left:1px solid #ffffff;border-right:1px solid #404040;border-bottom:1px solid #404040;box-shadow:inset -1px -1px 0 #808080;"></div>
<div style="position:absolute;left:168.0px;top:464.0px;width:6.0px;height:1.3000000000000114px;background:#202020;"></div>
<div style="position:absolute;left:168.0px;top:466.5px;width:6.0px;height:1.3000000000000114px;background:#202020;"></div>
<div style="position:absolute;left:168.0px;top:469.0px;width:6.0px;height:1.3000000000000114px;background:#202020;"></div>
<div style="position:absolute;left:183px;top:369px;width:63.5px;height:112.5px;box-sizing:border-box;border:1px solid #808080;box-shadow:inset 1px 1px 0 #ffffff, 1px 1px 0 #ffffff;"></div>
<div style="position:absolute;left:186.6px;top:365px;width:26.0px;height:8px;background:#dad7d0;"></div>
<div style="position:absolute;left:188.60px;top:363.70px;font-size:10px;line-height:10px;font-weight:400;color:#000;white-space:pre;transform-origin:0 0;transform:scaleX(0.861);-webkit-text-stroke:0.15px #000;">Zoom</div>
<div style="position:absolute;left:185.9px;top:375.4px;width:46.400000000000006px;height:18.600000000000023px;background:#f2f1ee;box-sizing:border-box;border-top:1px solid #404040;border-left:1px solid #404040;border-right:1px solid #ffffff;border-bottom:1px solid #ffffff;box-shadow:inset 1px 1px 0 #808080;"></div>
<div style="position:absolute;left:209.00px;top:381.30px;font-size:10px;line-height:10px;font-weight:400;color:#000;white-space:pre;transform-origin:0 0;transform:scaleX(0.863);-webkit-text-stroke:0.15px #000;">1:1</div>
<div style="position:absolute;left:225.29999999999998px;top:382.90000000000003px;width:4.800000000000011px;height:5.7999999999999545px;border-radius:50%;background:#a0c080;box-sizing:border-box;border:1.3px solid #305020;"></div>
<div style="position:absolute;left:232.3px;top:375.4px;width:10.699999999999989px;height:9.300000000000011px;background:#dad7d0;box-sizing:border-box;border-top:1px solid #ffffff;border-left:1px solid #ffffff;border-right:1px solid #404040;border-bottom:1px solid #404040;box-shadow:inset -1px -1px 0 #808080;"></div>
<div style="position:absolute;left:232.3px;top:384.7px;width:10.699999999999989px;height:9.300000000000011px;background:#dad7d0;box-sizing:border-box;border-top:1px solid #ffffff;border-left:1px solid #ffffff;border-right:1px solid #404040;border-bottom:1px solid #404040;box-shadow:inset -1px -1px 0 #808080;"></div>
<div style="position:absolute;left:235.15px;top:377.4px;width:0;height:0;border-left:2.5px solid transparent;border-right:2.5px solid transparent;border-bottom:3px solid #000;"></div>
<div style="position:absolute;left:235.15px;top:386.7px;width:0;height:0;border-left:2.5px solid transparent;border-right:2.5px solid transparent;border-top:3px solid #000;"></div>
<div style="position:absolute;left:186.70px;top:396.60px;font-size:10px;line-height:10px;font-weight:400;color:#000;white-space:pre;transform-origin:0 0;transform:scaleX(0.864);-webkit-text-stroke:0.15px #000;">Dsp:  400</div>
<div style="position:absolute;left:185.6px;top:413px;width:58.400000000000006px;height:16px;background:#dad7d0;box-sizing:border-box;border-right:1px solid #404040;border-bottom:1px solid #404040;box-shadow:inset -1px -1px 0 #808080, inset 1px 1px 0 #ffffff;"></div>
<div style="position:absolute;left:214.00px;top:417.00px;font-size:10px;line-height:10px;font-weight:400;color:#202020;white-space:pre;transform-origin:0 0;transform:scaleX(0.875);-webkit-text-stroke:0.15px #202020;">Auto</div>
<div style="position:absolute;left:236.6px;top:419.2px;width:5.199999999999989px;height:6.2000000000000455px;border-radius:50%;background:#b88878;box-sizing:border-box;border:1.3px solid #3a1a0c;"></div>
<div style="position:absolute;left:185.6px;top:429px;width:20.400000000000006px;height:16.69999999999999px;background:#dad7d0;box-sizing:border-box;border-right:1px solid #404040;border-bottom:1px solid #404040;box-shadow:inset -1px -1px 0 #808080, inset 1px 1px 0 #ffffff;"></div>
<div style="position:absolute;left:206px;top:429px;width:19px;height:16.69999999999999px;background:#ecebe6;box-sizing:border-box;border-top:1px solid #404040;border-left:1px solid #404040;border-right:1px solid #ffffff;border-bottom:1px solid #ffffff;box-shadow:inset 1px 1px 0 #808080;"></div>
<div style="position:absolute;left:225px;top:429px;width:19px;height:16.69999999999999px;background:#dad7d0;box-sizing:border-box;border-right:1px solid #404040;border-bottom:1px solid #404040;box-shadow:inset -1px -1px 0 #808080, inset 1px 1px 0 #ffffff;"></div>
<svg style="position:absolute;left:189px;top:432px" width="12" height="12" viewBox="0 0 12 12"><path d="M1 11 H5 M3 11 Q5 9 5 1 M9 11 Q5 9 5 5" stroke="#000" stroke-width="1.6" fill="none"/></svg>
<div style="position:absolute;left:198.79999999999998px;top:435.90000000000003px;width:4.800000000000011px;height:5.7999999999999545px;border-radius:50%;background:#b88878;box-sizing:border-box;border:1.3px solid #3a1a0c;"></div>
<svg style="position:absolute;left:208px;top:431px" width="12" height="13" viewBox="0 0 12 13"><path d="M1 7 H9 M6 1 V12 M3 12 Q6 10 6 7" stroke="#000" stroke-width="1.6" fill="none"/></svg>
<div style="position:absolute;left:217.29999999999998px;top:432.90000000000003px;width:4.800000000000011px;height:5.7999999999999545px;border-radius:50%;background:#90c070;box-sizing:border-box;border:1.3px solid #306020;"></div>
<svg style="position:absolute;left:227px;top:431px" width="12" height="13" viewBox="0 0 12 13"><path d="M1 2 Q5 4 5 7 V12 M9 2 Q5 4 5 7" stroke="#000" stroke-width="1.6" fill="none"/></svg>
<div style="position:absolute;left:236.79999999999998px;top:435.90000000000003px;width:4.800000000000011px;height:5.7999999999999545px;border-radius:50%;background:#b88878;box-sizing:border-box;border:1.3px solid #3a1a0c;"></div>
<div style="position:absolute;left:185.6px;top:453.7px;width:58.400000000000006px;height:12.300000000000011px;background:#eeede9;"></div>
<div style="position:absolute;left:185.6px;top:453.7px;width:12.300000000000011px;height:12.300000000000011px;background:#dad7d0;box-sizing:border-box;border-top:1px solid #ffffff;border-left:1px solid #ffffff;border-right:1px solid #404040;border-bottom:1px solid #404040;box-shadow:inset -1px -1px 0 #808080;"></div>
<div style="position:absolute;left:231.7px;top:453.7px;width:12.300000000000011px;height:12.300000000000011px;background:#dad7d0;box-sizing:border-box;border-top:1px solid #ffffff;border-left:1px solid #ffffff;border-right:1px solid #404040;border-bottom:1px solid #404040;box-shadow:inset -1px -1px 0 #808080;"></div>
<div style="position:absolute;left:189.75px;top:456.35px;width:0;height:0;border-right:3.5px solid #a0a0a0;border-top:3.5px solid transparent;border-bottom:3.5px solid transparent;"></div>
<div style="position:absolute;left:236.85px;top:456.35px;width:0;height:0;border-left:3.5px solid #a0a0a0;border-top:3.5px solid transparent;border-bottom:3.5px solid transparent;"></div>
<div style="position:absolute;left:186.50px;top:468.00px;font-size:10px;line-height:10px;font-weight:400;color:#202020;white-space:pre;transform-origin:0 0;transform:scaleX(0.837);-webkit-text-stroke:0.15px #202020;">Mem: 4K</div>
<div style="position:absolute;left:250px;top:369px;width:80.60000000000002px;height:112.5px;box-sizing:border-box;border:1px solid #808080;box-shadow:inset 1px 1px 0 #ffffff, 1px 1px 0 #ffffff;"></div>
<div style="position:absolute;left:253px;top:365px;width:42.30000000000001px;height:8px;background:#dad7d0;"></div>
<div style="position:absolute;left:255.00px;top:363.70px;font-size:10px;line-height:10px;font-weight:400;color:#000;white-space:pre;transform-origin:0 0;transform:scaleX(0.851);-webkit-text-stroke:0.15px #000;">Horizontal</div>
<div style="position:absolute;left:252px;top:378px;width:1.3000000000000114px;height:8px;background:#101010;"></div>
<div style="position:absolute;left:255px;top:378px;width:1.3000000000000114px;height:8px;background:#101010;"></div>
<div style="position:absolute;left:258px;top:378px;width:1.3000000000000114px;height:8px;background:#101010;"></div>
<div style="position:absolute;left:261px;top:378px;width:1.3000000000000114px;height:8px;background:#101010;"></div>
<div style="position:absolute;left:267.50px;top:377.80px;font-size:10px;line-height:10px;font-weight:400;color:#202020;white-space:pre;transform-origin:0 0;transform:scaleX(0.885);-webkit-text-stroke:0.15px #202020;">100ns/d</div>
<svg style="position:absolute;left:252px;top:389px" width="12" height="9" viewBox="0 0 12 9"><path d="M1 4.5 H10 M1 4.5 M10 0.5 V8.5 M9 4.5 L6.5 2 M9 4.5 L6.5 7" stroke="#101010" stroke-width="1.5" fill="none"/></svg>
<div style="position:absolute;left:267.50px;top:388.80px;font-size:10px;line-height:10px;font-weight:400;color:#202020;white-space:pre;transform-origin:0 0;transform:scaleX(0.930);-webkit-text-stroke:0.15px #202020;">N/A</div>
<svg style="position:absolute;left:252px;top:400px" width="12" height="9" viewBox="0 0 12 9"><path d="M1 4.5 H10 M1 0.5 V8.5 M2 4.5 L4.5 2 M2 4.5 L4.5 7 M10 0.5 V8.5 M9 4.5 L6.5 2 M9 4.5 L6.5 7" stroke="#101010" stroke-width="1.5" fill="none"/></svg>
<div style="position:absolute;left:267.50px;top:399.80px;font-size:10px;line-height:10px;font-weight:400;color:#202020;white-space:pre;transform-origin:0 0;transform:scaleX(0.930);-webkit-text-stroke:0.15px #202020;">N/A</div>
<svg style="position:absolute;left:252px;top:411px" width="12" height="9" viewBox="0 0 12 9"><path d="M1 4.5 H10 M1 0.5 V8.5 M2 4.5 L4.5 2 M2 4.5 L4.5 7 M10 0.5 V8.5 M9 4.5 L6.5 2 M9 4.5 L6.5 7" stroke="#101010" stroke-width="1.5" fill="none"/></svg>
<div style="position:absolute;left:267.50px;top:410.80px;font-size:10px;line-height:10px;font-weight:400;color:#202020;white-space:pre;transform-origin:0 0;transform:scaleX(0.930);-webkit-text-stroke:0.15px #202020;">N/A</div>
<div style="position:absolute;left:251px;top:426.5px;width:79px;height:1.0px;background:#808080;"></div>
<div style="position:absolute;left:251px;top:427.5px;width:79px;height:1.0px;background:#ffffff;"></div>
<div style="position:absolute;left:252px;top:434.5px;width:1.3000000000000114px;height:8.0px;background:#101010;"></div>
<div style="position:absolute;left:255px;top:434.5px;width:1.3000000000000114px;height:8.0px;background:#101010;"></div>
<div style="position:absolute;left:258px;top:434.5px;width:1.3000000000000114px;height:8.0px;background:#101010;"></div>
<div style="position:absolute;left:261px;top:434.5px;width:1.3000000000000114px;height:8.0px;background:#101010;"></div>
<div style="position:absolute;left:267.50px;top:434.30px;font-size:10px;line-height:10px;font-weight:400;color:#202020;white-space:pre;transform-origin:0 0;transform:scaleX(0.885);-webkit-text-stroke:0.15px #202020;">100ns/d</div>
<svg style="position:absolute;left:310px;top:432px" width="20" height="12" viewBox="0 0 20 12"><path d="M0.5 11 H2 V10 H3.5 V8 H5 V6 H6.5 V4 H8 V11Z" fill="#505050"/><rect x="9" y="1" width="10" height="10.5" fill="#38b030"/><rect x="11" y="2" width="1.2" height="9" fill="#a0e090"/><rect x="14.5" y="2" width="1.2" height="9" fill="#a0e090"/></svg>
<svg style="position:absolute;left:252px;top:448px" width="12" height="7" viewBox="0 0 12 7"><path d="M0.5 3.5 H11.5 M2 1 L4.5 3.5 L2 6 M10 1 L7.5 3.5 L10 6 M6 1 V6" stroke="#101010" stroke-width="1.4" fill="none"/></svg>
<div style="position:absolute;left:267.50px;top:445.30px;font-size:10px;line-height:10px;font-weight:400;color:#202020;white-space:pre;transform-origin:0 0;transform:scaleX(0.907);-webkit-text-stroke:0.15px #202020;">400MS/s</div>
<div style="position:absolute;left:251.6px;top:458.8px;width:77.4px;height:11.699999999999989px;background:#eeede9;"></div>
<div style="position:absolute;left:251.6px;top:458.8px;width:11.69999999999996px;height:11.699999999999989px;background:#dad7d0;box-sizing:border-box;border-top:1px solid #ffffff;border-left:1px solid #ffffff;border-right:1px solid #404040;border-bottom:1px solid #404040;box-shadow:inset -1px -1px 0 #808080;"></div>
<div style="position:absolute;left:317.3px;top:458.8px;width:11.699999999999989px;height:11.699999999999989px;background:#dad7d0;box-sizing:border-box;border-top:1px solid #ffffff;border-left:1px solid #ffffff;border-right:1px solid #404040;border-bottom:1px solid #404040;box-shadow:inset -1px -1px 0 #808080;"></div>
<div style="position:absolute;left:255.45px;top:461.15px;width:0;height:0;border-right:3.5px solid #000;border-top:3.5px solid transparent;border-bottom:3.5px solid transparent;"></div>
<div style="position:absolute;left:322.15px;top:461.15px;width:0;height:0;border-left:3.5px solid #000;border-top:3.5px solid transparent;border-bottom:3.5px solid transparent;"></div>
<div style="position:absolute;left:296px;top:459px;width:12px;height:11.5px;background:#808080;box-sizing:border-box;border-right:1px solid #404040;border-bottom:1px solid #404040;border-top:1px solid #c0c0c0;border-left:1px solid #c0c0c0;"></div>
<div style="position:absolute;left:263.3px;top:473px;width:1.1999999999999886px;height:5px;background:#606060;"></div>
<div style="position:absolute;left:281.6px;top:473px;width:1.1999999999999886px;height:5px;background:#606060;"></div>
<div style="position:absolute;left:298.4px;top:473px;width:1.1999999999999886px;height:5px;background:#606060;"></div>
<div style="position:absolute;left:316.7px;top:473px;width:1.1999999999999886px;height:5px;background:#606060;"></div>
<div style="position:absolute;left:333.5px;top:369px;width:71.10000000000002px;height:112.5px;box-sizing:border-box;border:1px solid #808080;box-shadow:inset 1px 1px 0 #ffffff, 1px 1px 0 #ffffff;"></div>
<div style="position:absolute;left:338.6px;top:365px;width:53.0px;height:8px;background:#dad7d0;"></div>
<div style="position:absolute;left:340.60px;top:364.00px;font-size:10px;line-height:10px;font-weight:400;color:#000;white-space:pre;transform-origin:0 0;transform:scaleX(0.829);-webkit-text-stroke:0.15px #000;">Trigger mode</div>
<div style="position:absolute;left:335.7px;top:382px;width:43.30000000000001px;height:16.399999999999977px;background:#dad7d0;box-sizing:border-box;border-right:1px solid #404040;border-bottom:1px solid #404040;box-shadow:inset -1px -1px 0 #808080, inset 1px 1px 0 #ffffff;"></div>
<div style="position:absolute;left:348.30px;top:385.60px;font-size:10px;line-height:10px;font-weight:400;color:#202020;white-space:pre;transform-origin:0 0;transform:scaleX(0.875);-webkit-text-stroke:0.15px #202020;">Auto</div>
<div style="position:absolute;left:379px;top:382px;width:23.5px;height:16.399999999999977px;background:#dad7d0;box-sizing:border-box;border-right:1px solid #404040;border-bottom:1px solid #404040;box-shadow:inset -1px -1px 0 #808080, inset 1px 1px 0 #ffffff;"></div>
<svg style="position:absolute;left:378px;top:380px" width="26" height="20" viewBox="0 0 26 20"><path d="M5.5 9.5 L8 7.5 L12.5 6.5 L16.5 10 L10.5 15.5 L5.5 12 Z M16.5 10 L21 14.5" stroke="#101010" stroke-width="1.3" fill="none" stroke-linejoin="round"/></svg>
<div style="position:absolute;left:335.7px;top:398.4px;width:43.30000000000001px;height:19.900000000000034px;background:#dad7d0;box-sizing:border-box;border-right:1px solid #404040;border-bottom:1px solid #404040;box-shadow:inset -1px -1px 0 #808080, inset 1px 1px 0 #ffffff;"></div>
<div style="position:absolute;left:342.5px;top:404.5px;width:8.0px;height:8.0px;border-radius:50%;background:#40b040;box-sizing:border-box;border:1px solid #307030;"></div>
<div style="position:absolute;left:356.00px;top:405.30px;font-size:10px;line-height:10px;font-weight:400;color:#000;white-space:pre;transform-origin:0 0;transform:scaleX(0.829);-webkit-text-stroke:0.15px #000;">TGD</div>
<div style="position:absolute;left:379px;top:398.4px;width:23.5px;height:19.900000000000034px;background:#dad7d0;box-sizing:border-box;border-right:1px solid #404040;border-bottom:1px solid #404040;box-shadow:inset -1px -1px 0 #808080, inset 1px 1px 0 #ffffff;"></div>
<div style="position:absolute;left:384.70px;top:405.30px;font-size:10px;line-height:10px;font-weight:400;color:#000;white-space:pre;transform-origin:0 0;transform:scaleX(0.863);-webkit-text-stroke:0.15px #000;">1/2</div>
<div style="position:absolute;left:336px;top:422px;width:43px;height:18px;background:#dad7d0;box-sizing:border-box;border-right:1px solid #404040;border-bottom:1px solid #404040;box-shadow:inset -1px -1px 0 #808080, inset 1px 1px 0 #ffffff;"></div>
<div style="position:absolute;left:348.00px;top:427.30px;font-size:10px;line-height:10px;font-weight:400;color:#000;white-space:pre;transform-origin:0 0;transform:scaleX(0.875);-webkit-text-stroke:0.15px #000;">Hold</div>
<div style="position:absolute;left:370.09999999999997px;top:429.2px;width:5.2000000000000455px;height:6.2000000000000455px;border-radius:50%;background:#b88878;box-sizing:border-box;border:1.3px solid #3a1a0c;"></div>
<div style="position:absolute;left:334px;top:450px;width:70px;height:1px;background:#808080;"></div>
<div style="position:absolute;left:334px;top:451px;width:70px;height:1px;background:#ffffff;"></div>
<div style="position:absolute;left:336px;top:456.5px;width:43px;height:18.0px;background:#dad7d0;box-sizing:border-box;border-right:1px solid #404040;border-bottom:1px solid #404040;box-shadow:inset -1px -1px 0 #808080, inset 1px 1px 0 #ffffff;"></div>
<div style="position:absolute;left:340.60px;top:461.80px;font-size:10px;line-height:10px;font-weight:400;color:#000;white-space:pre;transform-origin:0 0;transform:scaleX(0.831);-webkit-text-stroke:0.15px #000;">Simple</div>
<div style="position:absolute;left:370.09999999999997px;top:464.2px;width:5.2000000000000455px;height:6.2000000000000455px;border-radius:50%;background:#b88878;box-sizing:border-box;border:1.3px solid #3a1a0c;"></div>
<div style="position:absolute;left:406px;top:369px;width:234px;height:112.5px;box-sizing:border-box;border:1px solid #808080;box-shadow:inset 1px 1px 0 #ffffff, 1px 1px 0 #ffffff;"></div>
<div style="position:absolute;left:410.8px;top:365px;width:29.600000000000023px;height:8px;background:#dad7d0;"></div>
<div style="position:absolute;left:412.80px;top:363.40px;font-size:10px;line-height:10px;font-weight:400;color:#000;white-space:pre;transform-origin:0 0;transform:scaleX(0.818);-webkit-text-stroke:0.15px #000;">Trigger</div>
<div style="position:absolute;left:426.30px;top:377.20px;font-size:10px;line-height:10px;font-weight:400;color:#202020;white-space:pre;transform-origin:0 0;transform:scaleX(0.804);-webkit-text-stroke:0.15px #202020;">Primary</div>
<div style="position:absolute;left:486.50px;top:377.20px;font-size:10px;line-height:10px;font-weight:400;color:#202020;white-space:pre;transform-origin:0 0;transform:scaleX(0.858);-webkit-text-stroke:0.15px #202020;">Secondary</div>
<div style="position:absolute;left:408.6px;top:389.5px;width:31.899999999999977px;height:15.0px;background:#f0efea;box-sizing:border-box;border-top:1px solid #404040;border-left:1px solid #404040;border-right:1px solid #ffffff;border-bottom:1px solid #ffffff;box-shadow:inset 1px 1px 0 #808080;"></div>
<div style="position:absolute;left:432.9px;top:394.0px;width:4.600000000000023px;height:5.600000000000023px;border-radius:50%;background:#a0c080;box-sizing:border-box;border:1.3px solid #305020;"></div>
<div style="position:absolute;left:422.16px;top:393.30px;font-size:10px;line-height:10px;font-weight:400;color:#202020;white-space:pre;transform-origin:0 0;transform:scaleX(1.000);-webkit-text-stroke:0.15px #202020;">A</div>
<div style="position:absolute;left:440.5px;top:389.5px;width:31.899999999999977px;height:15.0px;background:#dad7d0;box-sizing:border-box;border-right:1px solid #404040;border-bottom:1px solid #404040;box-shadow:inset -1px -1px 0 #808080, inset 1px 1px 0 #ffffff;"></div>
<svg style="position:absolute;left:448px;top:391px" width="11" height="12" viewBox="0 0 11 12"><path d="M0.5 11 H4.5 V1 H10" stroke="#101010" stroke-width="1.5" fill="none"/></svg>
<div style="position:absolute;left:460px;top:395px;width:6.5px;height:4.5px;background:#40a040;box-sizing:border-box;border:1px solid #203018;border-radius:1px;"></div>
<div style="position:absolute;left:475px;top:389.5px;width:30.80000000000001px;height:15.0px;background:#dad7d0;box-sizing:border-box;border-right:1px solid #404040;border-bottom:1px solid #404040;box-shadow:inset -1px -1px 0 #808080, inset 1px 1px 0 #ffffff;"></div>
<div style="position:absolute;left:487.66px;top:393.30px;font-size:10px;line-height:10px;font-weight:400;color:#202020;white-space:pre;transform-origin:0 0;transform:scaleX(1.000);-webkit-text-stroke:0.15px #202020;">A</div>
<div style="position:absolute;left:498.09999999999997px;top:395.2px;width:5.2000000000000455px;height:6.2000000000000455px;border-radius:50%;background:#b88878;box-sizing:border-box;border:1.3px solid #3a1a0c;"></div>
<div style="position:absolute;left:505.8px;top:389.5px;width:33.099999999999966px;height:15.0px;background:#dad7d0;box-sizing:border-box;border-right:1px solid #404040;border-bottom:1px solid #404040;box-shadow:inset -1px -1px 0 #808080, inset 1px 1px 0 #ffffff;"></div>
<svg style="position:absolute;left:514px;top:391.5px" width="11" height="12" viewBox="0 0 11 12"><path d="M0.5 11 H4.5 V1 H10" stroke="#909090" stroke-width="1.5" fill="none"/></svg>
<div style="position:absolute;left:526px;top:395.0px;width:6.5px;height:4.5px;background:#f0f0f0;box-sizing:border-box;border:1px solid #a0a0a0;border-radius:1px;"></div>
<div style="position:absolute;left:408.6px;top:404.5px;width:31.899999999999977px;height:14.800000000000011px;background:#dad7d0;box-sizing:border-box;border-right:1px solid #404040;border-bottom:1px solid #404040;box-shadow:inset -1px -1px 0 #808080, inset 1px 1px 0 #ffffff;"></div>
<div style="position:absolute;left:433.09999999999997px;top:410.09999999999997px;width:5.2000000000000455px;height:6.2000000000000455px;border-radius:50%;background:#b88878;box-sizing:border-box;border:1.3px solid #3a1a0c;"></div>
<div style="position:absolute;left:422.16px;top:408.10px;font-size:10px;line-height:10px;font-weight:400;color:#202020;white-space:pre;transform-origin:0 0;transform:scaleX(1.000);-webkit-text-stroke:0.15px #202020;">B</div>
<div style="position:absolute;left:440.5px;top:404.5px;width:31.899999999999977px;height:14.800000000000011px;background:#dad7d0;box-sizing:border-box;border-right:1px solid #404040;border-bottom:1px solid #404040;box-shadow:inset -1px -1px 0 #808080, inset 1px 1px 0 #ffffff;"></div>
<svg style="position:absolute;left:448px;top:406.5px" width="11" height="12" viewBox="0 0 11 12"><path d="M0.5 11 H4.5 V1 H10" stroke="#909090" stroke-width="1.5" fill="none"/></svg>
<div style="position:absolute;left:460px;top:410.0px;width:6.5px;height:4.5px;background:#f0f0f0;box-sizing:border-box;border:1px solid #a0a0a0;border-radius:1px;"></div>
<div style="position:absolute;left:475px;top:404.5px;width:30.80000000000001px;height:14.800000000000011px;background:#dad7d0;box-sizing:border-box;border-right:1px solid #404040;border-bottom:1px solid #404040;box-shadow:inset -1px -1px 0 #808080, inset 1px 1px 0 #ffffff;"></div>
<div style="position:absolute;left:487.66px;top:408.10px;font-size:10px;line-height:10px;font-weight:400;color:#202020;white-space:pre;transform-origin:0 0;transform:scaleX(1.000);-webkit-text-stroke:0.15px #202020;">B</div>
<div style="position:absolute;left:498.09999999999997px;top:410.09999999999997px;width:5.2000000000000455px;height:6.2000000000000455px;border-radius:50%;background:#b88878;box-sizing:border-box;border:1.3px solid #3a1a0c;"></div>
<div style="position:absolute;left:505.8px;top:404.5px;width:33.099999999999966px;height:14.800000000000011px;background:#dad7d0;box-sizing:border-box;border-right:1px solid #404040;border-bottom:1px solid #404040;box-shadow:inset -1px -1px 0 #808080, inset 1px 1px 0 #ffffff;"></div>
<svg style="position:absolute;left:514px;top:406.5px" width="11" height="12" viewBox="0 0 11 12"><path d="M0.5 11 H4.5 V1 H10" stroke="#909090" stroke-width="1.5" fill="none"/></svg>
<div style="position:absolute;left:526px;top:410.0px;width:6.5px;height:4.5px;background:#f0f0f0;box-sizing:border-box;border:1px solid #a0a0a0;border-radius:1px;"></div>
<div style="position:absolute;left:408.6px;top:419.3px;width:31.899999999999977px;height:15.199999999999989px;background:#dad7d0;box-sizing:border-box;border-right:1px solid #404040;border-bottom:1px solid #404040;box-shadow:inset -1px -1px 0 #808080, inset 1px 1px 0 #ffffff;"></div>
<div style="position:absolute;left:433.09999999999997px;top:425.09999999999997px;width:5.2000000000000455px;height:6.2000000000000455px;border-radius:50%;background:#b88878;box-sizing:border-box;border:1.3px solid #3a1a0c;"></div>
<div style="position:absolute;left:422.16px;top:423.30px;font-size:10px;line-height:10px;font-weight:400;color:#202020;white-space:pre;transform-origin:0 0;transform:scaleX(1.000);-webkit-text-stroke:0.15px #202020;">E</div>
<div style="position:absolute;left:440.5px;top:419.3px;width:31.899999999999977px;height:15.199999999999989px;background:#dad7d0;box-sizing:border-box;border-right:1px solid #404040;border-bottom:1px solid #404040;box-shadow:inset -1px -1px 0 #808080, inset 1px 1px 0 #ffffff;"></div>
<svg style="position:absolute;left:448px;top:421.3px" width="11" height="12" viewBox="0 0 11 12"><path d="M0.5 11 H4.5 V1 H10" stroke="#909090" stroke-width="1.5" fill="none"/></svg>
<div style="position:absolute;left:460px;top:424.8px;width:6.5px;height:4.5px;background:#f0f0f0;box-sizing:border-box;border:1px solid #a0a0a0;border-radius:1px;"></div>
<div style="position:absolute;left:475px;top:419.3px;width:30.80000000000001px;height:15.199999999999989px;background:#dad7d0;box-sizing:border-box;border-right:1px solid #404040;border-bottom:1px solid #404040;box-shadow:inset -1px -1px 0 #808080, inset 1px 1px 0 #ffffff;"></div>
<div style="position:absolute;left:487.66px;top:423.30px;font-size:10px;line-height:10px;font-weight:400;color:#202020;white-space:pre;transform-origin:0 0;transform:scaleX(1.000);-webkit-text-stroke:0.15px #202020;">E</div>
<div style="position:absolute;left:498.09999999999997px;top:425.09999999999997px;width:5.2000000000000455px;height:6.2000000000000455px;border-radius:50%;background:#b88878;box-sizing:border-box;border:1.3px solid #3a1a0c;"></div>
<div style="position:absolute;left:505.8px;top:419.3px;width:33.099999999999966px;height:15.199999999999989px;background:#dad7d0;box-sizing:border-box;border-right:1px solid #404040;border-bottom:1px solid #404040;box-shadow:inset -1px -1px 0 #808080, inset 1px 1px 0 #ffffff;"></div>
<svg style="position:absolute;left:514px;top:421.3px" width="11" height="12" viewBox="0 0 11 12"><path d="M0.5 11 H4.5 V1 H10" stroke="#909090" stroke-width="1.5" fill="none"/></svg>
<div style="position:absolute;left:526px;top:424.8px;width:6.5px;height:4.5px;background:#f0f0f0;box-sizing:border-box;border:1px solid #a0a0a0;border-radius:1px;"></div>
<div style="position:absolute;left:409.60px;top:443.90px;font-size:10px;line-height:10px;font-weight:400;color:#202020;white-space:pre;transform-origin:0 0;transform:scaleX(0.840);-webkit-text-stroke:0.15px #202020;">PFL</div>
<div style="position:absolute;left:426px;top:440.3px;width:39px;height:16.0px;background:#ffffff;box-sizing:border-box;border-top:1px solid #808080;border-left:1px solid #808080;border-right:1px solid #ffffff;border-bottom:1px solid #ffffff;box-shadow:inset 1px 1px 0 #404040;"></div>
<div style="position:absolute;left:451.44px;top:444.00px;font-size:10px;line-height:10px;font-weight:400;color:#202020;white-space:pre;transform-origin:0 0;transform:scaleX(1.000);-webkit-text-stroke:0.15px #202020;">0s</div>
<div style="position:absolute;left:465px;top:440.3px;width:7px;height:8.0px;background:#dad7d0;box-sizing:border-box;border-top:1px solid #ffffff;border-left:1px solid #ffffff;border-right:1px solid #404040;border-bottom:1px solid #404040;box-shadow:inset -1px -1px 0 #808080;"></div>
<div style="position:absolute;left:465px;top:448.3px;width:7px;height:8.0px;background:#dad7d0;box-sizing:border-box;border-top:1px solid #ffffff;border-left:1px solid #ffffff;border-right:1px solid #404040;border-bottom:1px solid #404040;box-shadow:inset -1px -1px 0 #808080;"></div>
<div style="position:absolute;left:466.0px;top:442.3px;width:0;height:0;border-left:2.5px solid transparent;border-right:2.5px solid transparent;border-bottom:3px solid #000;"></div>
<div style="position:absolute;left:466.0px;top:450.3px;width:0;height:0;border-left:2.5px solid transparent;border-right:2.5px solid transparent;border-top:3px solid #000;"></div>
<div style="position:absolute;left:476.30px;top:443.90px;font-size:10px;line-height:10px;font-weight:400;color:#202020;white-space:pre;transform-origin:0 0;transform:scaleX(0.840);-webkit-text-stroke:0.15px #202020;">SFL</div>
<div style="position:absolute;left:492.9px;top:440.3px;width:39.10000000000002px;height:16.0px;background:#ffffff;box-sizing:border-box;border-top:1px solid #808080;border-left:1px solid #808080;border-right:1px solid #ffffff;border-bottom:1px solid #ffffff;box-shadow:inset 1px 1px 0 #404040;"></div>
<div style="position:absolute;left:518.44px;top:444.00px;font-size:10px;line-height:10px;font-weight:400;color:#202020;white-space:pre;transform-origin:0 0;transform:scaleX(1.000);-webkit-text-stroke:0.15px #202020;">0s</div>
<div style="position:absolute;left:532px;top:440.3px;width:7px;height:8.0px;background:#dad7d0;box-sizing:border-box;border-top:1px solid #ffffff;border-left:1px solid #ffffff;border-right:1px solid #404040;border-bottom:1px solid #404040;box-shadow:inset -1px -1px 0 #808080;"></div>
<div style="position:absolute;left:532px;top:448.3px;width:7px;height:8.0px;background:#dad7d0;box-sizing:border-box;border-top:1px solid #ffffff;border-left:1px solid #ffffff;border-right:1px solid #404040;border-bottom:1px solid #404040;box-shadow:inset -1px -1px 0 #808080;"></div>
<div style="position:absolute;left:533.0px;top:442.3px;width:0;height:0;border-left:2.5px solid transparent;border-right:2.5px solid transparent;border-bottom:3px solid #000;"></div>
<div style="position:absolute;left:533.0px;top:450.3px;width:0;height:0;border-left:2.5px solid transparent;border-right:2.5px solid transparent;border-top:3px solid #000;"></div>
<div style="position:absolute;left:409.60px;top:461.40px;font-size:10px;line-height:10px;font-weight:400;color:#202020;white-space:pre;transform-origin:0 0;transform:scaleX(0.784);-webkit-text-stroke:0.15px #202020;">NOP</div>
<div style="position:absolute;left:434px;top:458.5px;width:31px;height:14.800000000000011px;background:#ffffff;box-sizing:border-box;border-top:1px solid #808080;border-left:1px solid #808080;border-right:1px solid #ffffff;border-bottom:1px solid #ffffff;box-shadow:inset 1px 1px 0 #404040;"></div>
<div style="position:absolute;left:456.44px;top:461.50px;font-size:10px;line-height:10px;font-weight:400;color:#202020;white-space:pre;transform-origin:0 0;transform:scaleX(1.000);-webkit-text-stroke:0.15px #202020;">1</div>
<div style="position:absolute;left:465px;top:458.5px;width:7px;height:7.399999999999977px;background:#dad7d0;box-sizing:border-box;border-top:1px solid #ffffff;border-left:1px solid #ffffff;border-right:1px solid #404040;border-bottom:1px solid #404040;box-shadow:inset -1px -1px 0 #808080;"></div>
<div style="position:absolute;left:465px;top:465.9px;width:7px;height:7.400000000000034px;background:#dad7d0;box-sizing:border-box;border-top:1px solid #ffffff;border-left:1px solid #ffffff;border-right:1px solid #404040;border-bottom:1px solid #404040;box-shadow:inset -1px -1px 0 #808080;"></div>
<div style="position:absolute;left:466.0px;top:460.5px;width:0;height:0;border-left:2.5px solid transparent;border-right:2.5px solid transparent;border-bottom:3px solid #000;"></div>
<div style="position:absolute;left:466.0px;top:467.9px;width:0;height:0;border-left:2.5px solid transparent;border-right:2.5px solid transparent;border-top:3px solid #000;"></div>
<div style="position:absolute;left:476.30px;top:461.40px;font-size:10px;line-height:10px;font-weight:400;color:#202020;white-space:pre;transform-origin:0 0;transform:scaleX(0.784);-webkit-text-stroke:0.15px #202020;">NOS</div>
<div style="position:absolute;left:500px;top:458.5px;width:32px;height:14.800000000000011px;background:#ffffff;box-sizing:border-box;border-top:1px solid #808080;border-left:1px solid #808080;border-right:1px solid #ffffff;border-bottom:1px solid #ffffff;box-shadow:inset 1px 1px 0 #404040;"></div>
<div style="position:absolute;left:523.44px;top:461.50px;font-size:10px;line-height:10px;font-weight:400;color:#202020;white-space:pre;transform-origin:0 0;transform:scaleX(1.000);-webkit-text-stroke:0.15px #202020;">1</div>
<div style="position:absolute;left:532px;top:458.5px;width:7px;height:7.399999999999977px;background:#dad7d0;box-sizing:border-box;border-top:1px solid #ffffff;border-left:1px solid #ffffff;border-right:1px solid #404040;border-bottom:1px solid #404040;box-shadow:inset -1px -1px 0 #808080;"></div>
<div style="position:absolute;left:532px;top:465.9px;width:7px;height:7.400000000000034px;background:#dad7d0;box-sizing:border-box;border-top:1px solid #ffffff;border-left:1px solid #ffffff;border-right:1px solid #404040;border-bottom:1px solid #404040;box-shadow:inset -1px -1px 0 #808080;"></div>
<div style="position:absolute;left:533.0px;top:460.5px;width:0;height:0;border-left:2.5px solid transparent;border-right:2.5px solid transparent;border-bottom:3px solid #000;"></div>
<div style="position:absolute;left:533.0px;top:467.9px;width:0;height:0;border-left:2.5px solid transparent;border-right:2.5px solid transparent;border-top:3px solid #000;"></div>
<div style="position:absolute;left:575.90px;top:377.90px;font-size:10px;line-height:10px;font-weight:400;color:#000;white-space:pre;transform-origin:0 0;transform:scaleX(0.841);-webkit-text-stroke:0.15px #000;-webkit-text-stroke:0.35px #000;">Hold-off</div>
<div style="position:absolute;left:544.3px;top:390.3px;width:66.40000000000009px;height:15.599999999999966px;background:#ffffff;box-sizing:border-box;border-top:1px solid #808080;border-left:1px solid #808080;border-right:1px solid #ffffff;border-bottom:1px solid #ffffff;box-shadow:inset 1px 1px 0 #404040;"></div>
<div style="position:absolute;left:584.00px;top:393.50px;font-size:10px;line-height:10px;font-weight:400;color:#a4a4a4;white-space:pre;transform-origin:0 0;transform:scaleX(0.732);-webkit-text-stroke:0.15px #a4a4a4;text-shadow:1px 1px 0 #ffffff;">5.13ms</div>
<div style="position:absolute;left:610.7px;top:390.3px;width:26.59999999999991px;height:15.599999999999966px;background:#dad7d0;box-sizing:border-box;border-right:1px solid #404040;border-bottom:1px solid #404040;box-shadow:inset -1px -1px 0 #808080, inset 1px 1px 0 #ffffff;"></div>
<div style="position:absolute;left:613.50px;top:393.50px;font-size:10px;line-height:10px;font-weight:400;color:#a4a4a4;white-space:pre;transform-origin:0 0;transform:scaleX(0.923);-webkit-text-stroke:0.15px #a4a4a4;text-shadow:1px 1px 0 #ffffff;">Auto</div>
<div style="position:absolute;left:544.3px;top:407.3px;width:93.0px;height:12.300000000000011px;background:#eeede9;"></div>
<div style="position:absolute;left:544.3px;top:407.3px;width:12.299999999999955px;height:12.300000000000011px;background:#dad7d0;box-sizing:border-box;border-top:1px solid #ffffff;border-left:1px solid #ffffff;border-right:1px solid #404040;border-bottom:1px solid #404040;box-shadow:inset -1px -1px 0 #808080;"></div>
<div style="position:absolute;left:625.0px;top:407.3px;width:12.299999999999955px;height:12.300000000000011px;background:#dad7d0;box-sizing:border-box;border-top:1px solid #ffffff;border-left:1px solid #ffffff;border-right:1px solid #404040;border-bottom:1px solid #404040;box-shadow:inset -1px -1px 0 #808080;"></div>
<div style="position:absolute;left:548.4499999999999px;top:409.95000000000005px;width:0;height:0;border-right:3.5px solid #a0a0a0;border-top:3.5px solid transparent;border-bottom:3.5px solid transparent;"></div>
<div style="position:absolute;left:630.15px;top:409.95000000000005px;width:0;height:0;border-left:3.5px solid #a0a0a0;border-top:3.5px solid transparent;border-bottom:3.5px solid transparent;"></div>
<div style="position:absolute;left:567.60px;top:430.50px;font-size:10px;line-height:10px;font-weight:400;color:#000;white-space:pre;transform-origin:0 0;transform:scaleX(0.842);-webkit-text-stroke:0.15px #000;">After trigger</div>
<div style="position:absolute;left:544.3px;top:443px;width:56.30000000000007px;height:15.5px;background:#ffffff;box-sizing:border-box;border-top:1px solid #808080;border-left:1px solid #808080;border-right:1px solid #ffffff;border-bottom:1px solid #ffffff;box-shadow:inset 1px 1px 0 #404040;"></div>
<div style="position:absolute;left:580.50px;top:446.00px;font-size:10px;line-height:10px;font-weight:400;color:#a4a4a4;white-space:pre;transform-origin:0 0;transform:scaleX(0.849);-webkit-text-stroke:0.15px #a4a4a4;text-shadow:1px 1px 0 #ffffff;">50%</div>
<div style="position:absolute;left:600.6px;top:443px;width:23.899999999999977px;height:15.5px;background:#dad7d0;box-sizing:border-box;border-right:1px solid #404040;border-bottom:1px solid #404040;box-shadow:inset -1px -1px 0 #808080, inset 1px 1px 0 #ffffff;"></div>
<div style="position:absolute;left:603.50px;top:446.00px;font-size:10px;line-height:10px;font-weight:400;color:#000;white-space:pre;transform-origin:0 0;transform:scaleX(0.876);-webkit-text-stroke:0.15px #000;">HSC</div>
<div style="position:absolute;left:624.5px;top:443px;width:12.799999999999955px;height:15.5px;background:#dad7d0;box-sizing:border-box;border-right:1px solid #404040;border-bottom:1px solid #404040;box-shadow:inset -1px -1px 0 #808080, inset 1px 1px 0 #ffffff;"></div>
<div style="position:absolute;left:626.45px;top:446.00px;font-size:10px;line-height:10px;font-weight:400;color:#000;white-space:pre;transform-origin:0 0;transform:scaleX(1.000);-webkit-text-stroke:0.15px #000;">%</div>
<div style="position:absolute;left:544.3px;top:459.4px;width:93.0px;height:12.900000000000034px;background:#eeede9;"></div>
<div style="position:absolute;left:544.3px;top:459.4px;width:12.900000000000091px;height:12.900000000000034px;background:#dad7d0;box-sizing:border-box;border-top:1px solid #ffffff;border-left:1px solid #ffffff;border-right:1px solid #404040;border-bottom:1px solid #404040;box-shadow:inset -1px -1px 0 #808080;"></div>
<div style="position:absolute;left:624.3999999999999px;top:459.4px;width:12.900000000000091px;height:12.900000000000034px;background:#dad7d0;box-sizing:border-box;border-top:1px solid #ffffff;border-left:1px solid #ffffff;border-right:1px solid #404040;border-bottom:1px solid #404040;box-shadow:inset -1px -1px 0 #808080;"></div>
<div style="position:absolute;left:548.75px;top:462.35px;width:0;height:0;border-right:3.5px solid #a0a0a0;border-top:3.5px solid transparent;border-bottom:3.5px solid transparent;"></div>
<div style="position:absolute;left:629.8499999999999px;top:462.35px;width:0;height:0;border-left:3.5px solid #a0a0a0;border-top:3.5px solid transparent;border-bottom:3.5px solid transparent;"></div>
</body></html>
